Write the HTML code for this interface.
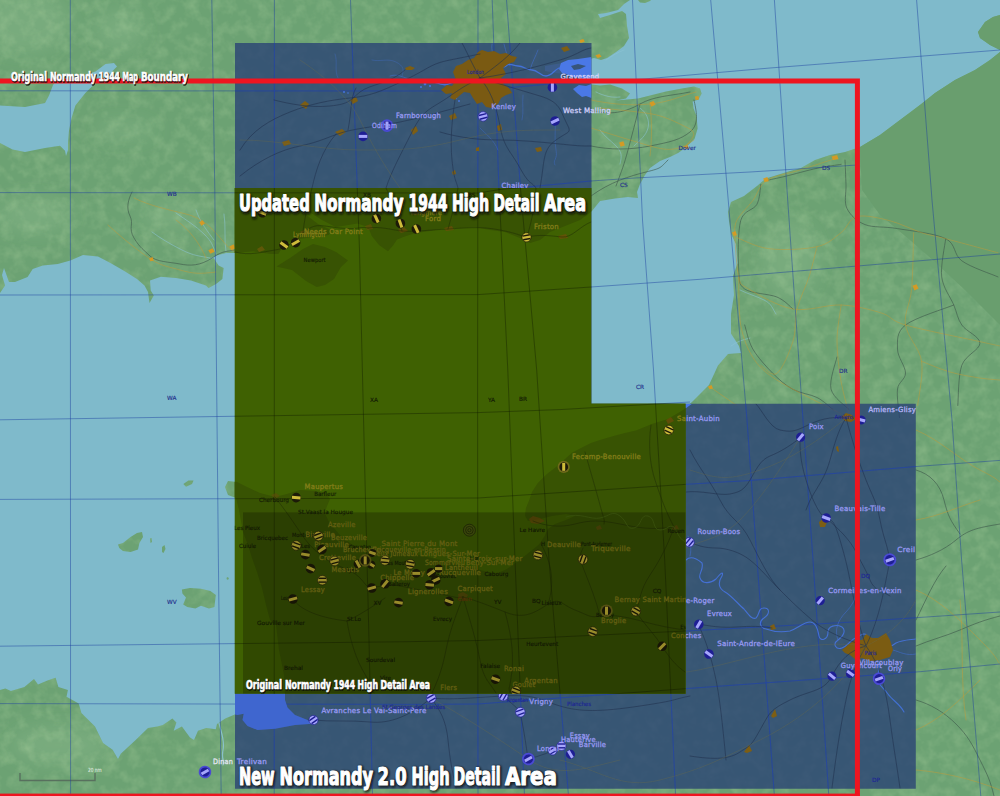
<!DOCTYPE html><html><head><meta charset="utf-8"><title>Normandy 2.0 map areas</title>
<style>html,body{margin:0;padding:0;background:#7fbacb;overflow:hidden}svg{display:block}
.lb{font-family:"DejaVu Sans","Liberation Sans",sans-serif;font-size:7.2px;letter-spacing:.25px}
.sm{font-family:"DejaVu Sans","Liberation Sans",sans-serif;font-size:5.8px}
.ti{font-family:"DejaVu Sans Condensed","DejaVu Sans","Liberation Sans",sans-serif;font-weight:bold}
</style></head><body>
<svg width="1000" height="796" viewBox="0 0 1000 796">
<defs>
<clipPath id="cb"><polygon points="235.0,43.0 591.5,43.0 591.5,403.7 915.8,403.7 915.8,788.7 235.0,788.7"/></clipPath>
<clipPath id="cg"><polygon points="234.7,188.0 591.3,188.0 591.3,403.5 685.6,403.5 685.6,693.7 234.7,693.7"/></clipPath>
<clipPath id="cbo"><path clip-rule="evenodd" d="M235.0 43.0 L591.5 43.0 L591.5 403.7 L915.8 403.7 L915.8 788.7 L235.0 788.7 Z M234.7 188.0 L591.3 188.0 L591.3 403.5 L685.6 403.5 L685.6 693.7 L234.7 693.7 Z"/></clipPath>
<clipPath id="cl">
<polygon points="0.0,0.0 630.0,0.0 624.0,4.0 618.0,10.0 606.0,13.0 598.0,14.0 600.0,18.0 610.0,15.0 622.0,11.0 626.0,14.0 627.0,26.0 629.0,38.0 624.0,46.0 616.0,52.0 607.0,58.0 601.0,60.0 594.0,58.0 585.0,60.0 570.0,62.0 556.0,64.0 545.0,66.0 545.0,71.0 556.0,73.0 570.0,75.0 580.0,80.0 592.0,84.4 600.0,85.4 610.0,84.4 622.0,88.4 630.0,93.5 626.0,98.5 616.0,100.5 638.0,98.5 650.0,95.5 666.0,91.5 682.0,88.4 694.0,86.4 700.0,88.4 701.6,93.5 698.6,99.5 692.6,101.5 693.6,108.5 696.6,116.6 697.6,128.6 694.6,138.7 686.6,146.7 678.5,152.8 670.5,156.8 660.0,161.0 650.0,168.0 645.0,175.0 640.0,184.0 637.0,192.0 638.0,198.0 628.0,197.0 615.0,198.5 600.0,201.0 592.0,211.0 580.0,220.0 565.0,226.0 550.0,232.0 540.0,240.0 530.0,243.0 520.0,238.0 505.0,232.0 490.0,230.0 475.0,227.0 460.0,228.0 446.0,228.0 430.0,231.0 416.0,233.0 406.0,236.0 397.0,239.6 393.4,245.0 388.0,251.3 379.0,245.0 371.8,236.0 368.2,227.0 357.4,223.4 346.6,225.2 335.8,227.0 322.0,220.0 308.0,211.0 305.0,214.0 318.0,224.0 332.2,230.6 328.6,235.1 314.2,236.9 299.8,238.7 289.0,241.4 281.8,248.6 278.2,254.0 271.0,254.0 253.0,251.3 235.0,253.0 226.0,253.0 216.0,255.4 206.0,260.4 213.6,258.0 218.6,265.4 223.6,268.0 222.4,279.0 216.0,284.0 208.5,288.0 206.0,285.5 191.0,280.5 176.0,278.0 160.8,276.7 150.0,280.5 150.7,290.5 153.8,295.6 149.5,303.0 148.0,292.0 144.5,285.5 137.0,279.0 125.6,271.7 110.5,263.0 98.0,256.6 83.0,255.0 70.4,260.4 57.8,264.0 42.7,265.4 32.7,269.0 27.6,277.0 15.0,282.0 9.0,282.0 4.0,268.0 2.0,275.0 5.0,285.5 0.0,293.0 0.0,143.0 12.5,149.5 25.0,152.0 45.0,148.0 60.0,145.7 65.0,150.7 66.0,156.0 68.0,150.0 68.0,143.0 69.0,130.6 71.6,118.0 75.4,105.5 85.4,93.0 95.5,83.0 110.5,73.0 117.0,66.5 114.0,63.0 105.5,64.0 95.5,71.6 82.0,76.0 70.0,78.0 58.0,78.0 53.0,85.0 49.0,95.5 45.0,103.0 25.0,107.0 0.0,105.5"/>
<polygon points="276.5,266.5 290.0,258.0 303.0,249.0 313.0,244.0 325.0,247.0 336.0,252.0 348.0,260.5 341.0,267.0 334.0,279.0 325.0,285.0 316.7,287.0 306.0,281.0 292.0,270.0"/>
<polygon points="1000.0,52.0 990.0,60.0 975.0,70.0 955.0,80.0 935.0,93.0 920.0,105.0 900.0,120.0 880.0,135.0 860.0,147.0 845.0,152.0 830.0,155.0 815.0,160.0 801.0,168.0 790.0,171.0 766.0,178.4 757.0,186.0 744.0,196.0 731.0,202.0 728.0,212.0 729.0,221.0 731.0,234.0 736.0,244.0 737.6,263.0 733.0,276.0 734.0,295.0 731.0,314.0 731.0,333.6 739.0,346.0 741.0,353.0 728.0,354.0 718.0,365.6 709.0,385.0 693.0,401.0 686.0,407.5 684.0,409.6 668.0,419.0 652.0,424.0 636.0,430.4 625.0,433.0 613.6,436.0 600.0,440.0 591.0,443.0 583.0,447.0 572.0,452.8 565.0,459.0 558.0,465.5 547.0,474.0 537.8,483.0 532.0,492.0 529.0,500.7 526.0,508.0 525.0,515.8 528.0,521.0 540.0,519.0 552.0,516.0 566.0,514.0 575.0,516.0 566.0,520.0 555.0,524.0 548.0,529.0 544.4,536.6 539.0,544.4 526.0,555.0 513.0,565.0 505.0,570.0 497.6,573.0 490.0,572.5 482.0,570.4 461.0,565.0 440.4,560.0 422.0,556.0 404.0,551.0 385.8,548.3 375.0,548.6 367.6,549.6 359.0,547.5 352.0,544.4 345.0,539.5 339.0,534.0 333.0,527.0 328.6,521.0 324.7,513.0 327.0,506.0 330.0,499.0 325.0,493.0 315.0,491.0 300.0,490.0 287.0,494.0 275.0,497.0 260.0,493.0 247.0,487.0 237.0,482.0 228.0,481.0 225.0,487.0 228.0,495.0 236.0,498.0 239.0,510.0 241.0,521.0 243.0,532.0 248.0,545.0 252.0,558.0 257.0,572.0 262.0,588.0 266.0,605.0 270.0,620.0 276.0,625.0 279.0,650.0 284.0,675.0 285.0,694.0 285.0,700.0 287.5,707.5 295.0,715.0 307.5,720.0 312.5,723.7 295.0,725.0 275.0,728.7 257.5,730.0 247.5,726.0 242.5,720.0 243.7,713.7 237.5,715.0 234.8,714.4 225.3,718.4 217.0,723.9 215.8,729.3 206.3,728.0 198.0,730.7 194.0,740.0 190.0,737.4 181.9,726.6 173.7,730.7 176.4,722.5 172.4,718.4 162.9,725.0 157.4,726.6 148.0,728.0 135.7,740.0 120.8,753.7 118.0,759.0 112.6,749.7 103.0,742.9 95.0,726.6 81.4,713.0 78.7,703.5 66.5,696.7 67.9,690.0 58.4,687.0 55.6,677.7 47.5,680.4 38.0,684.5 34.0,679.0 24.4,687.0 10.9,691.0 5.4,688.6 0.0,690.0 0.0,796.0 1000.0,796.0"/>
<polygon points="1000.0,15.0 993.0,17.0 985.0,22.0 978.0,32.0 980.0,38.0 990.0,45.0 1000.0,50.0"/>
<polygon points="181.9,589.5 190.0,588.0 200.9,588.7 210.4,590.9 215.8,595.0 214.4,607.0 209.0,608.5 200.9,605.8 195.4,608.5 187.3,607.0 183.2,604.4 186.0,597.6 182.4,593.6"/>
<polygon points="118.0,544.6 123.0,543.0 130.6,537.0 137.0,533.0 142.0,532.0 143.0,537.0 139.4,543.0 138.0,549.6 130.6,552.0 123.0,551.0 119.3,548.0"/>
<polygon points="183.4,484.0 188.4,480.5 193.5,480.5 192.0,484.0 186.0,486.8"/>
<polygon points="150.0,538.5 151.5,538.0 152.0,542.0 150.5,543.0"/>
<polygon points="162.0,547.0 164.5,545.0 165.5,549.0 163.5,553.0 162.0,552.0"/>
<polygon points="638.0,0.0 640.0,2.4 645.0,3.0 650.0,1.0 651.0,0.0"/>
<polygon points="227.0,577.0 229.0,578.0 228.0,580.0 226.5,579.0"/>
</clipPath>
<g id="lands">
<polygon points="0.0,0.0 630.0,0.0 624.0,4.0 618.0,10.0 606.0,13.0 598.0,14.0 600.0,18.0 610.0,15.0 622.0,11.0 626.0,14.0 627.0,26.0 629.0,38.0 624.0,46.0 616.0,52.0 607.0,58.0 601.0,60.0 594.0,58.0 585.0,60.0 570.0,62.0 556.0,64.0 545.0,66.0 545.0,71.0 556.0,73.0 570.0,75.0 580.0,80.0 592.0,84.4 600.0,85.4 610.0,84.4 622.0,88.4 630.0,93.5 626.0,98.5 616.0,100.5 638.0,98.5 650.0,95.5 666.0,91.5 682.0,88.4 694.0,86.4 700.0,88.4 701.6,93.5 698.6,99.5 692.6,101.5 693.6,108.5 696.6,116.6 697.6,128.6 694.6,138.7 686.6,146.7 678.5,152.8 670.5,156.8 660.0,161.0 650.0,168.0 645.0,175.0 640.0,184.0 637.0,192.0 638.0,198.0 628.0,197.0 615.0,198.5 600.0,201.0 592.0,211.0 580.0,220.0 565.0,226.0 550.0,232.0 540.0,240.0 530.0,243.0 520.0,238.0 505.0,232.0 490.0,230.0 475.0,227.0 460.0,228.0 446.0,228.0 430.0,231.0 416.0,233.0 406.0,236.0 397.0,239.6 393.4,245.0 388.0,251.3 379.0,245.0 371.8,236.0 368.2,227.0 357.4,223.4 346.6,225.2 335.8,227.0 322.0,220.0 308.0,211.0 305.0,214.0 318.0,224.0 332.2,230.6 328.6,235.1 314.2,236.9 299.8,238.7 289.0,241.4 281.8,248.6 278.2,254.0 271.0,254.0 253.0,251.3 235.0,253.0 226.0,253.0 216.0,255.4 206.0,260.4 213.6,258.0 218.6,265.4 223.6,268.0 222.4,279.0 216.0,284.0 208.5,288.0 206.0,285.5 191.0,280.5 176.0,278.0 160.8,276.7 150.0,280.5 150.7,290.5 153.8,295.6 149.5,303.0 148.0,292.0 144.5,285.5 137.0,279.0 125.6,271.7 110.5,263.0 98.0,256.6 83.0,255.0 70.4,260.4 57.8,264.0 42.7,265.4 32.7,269.0 27.6,277.0 15.0,282.0 9.0,282.0 4.0,268.0 2.0,275.0 5.0,285.5 0.0,293.0 0.0,143.0 12.5,149.5 25.0,152.0 45.0,148.0 60.0,145.7 65.0,150.7 66.0,156.0 68.0,150.0 68.0,143.0 69.0,130.6 71.6,118.0 75.4,105.5 85.4,93.0 95.5,83.0 110.5,73.0 117.0,66.5 114.0,63.0 105.5,64.0 95.5,71.6 82.0,76.0 70.0,78.0 58.0,78.0 53.0,85.0 49.0,95.5 45.0,103.0 25.0,107.0 0.0,105.5"/>
<polygon points="276.5,266.5 290.0,258.0 303.0,249.0 313.0,244.0 325.0,247.0 336.0,252.0 348.0,260.5 341.0,267.0 334.0,279.0 325.0,285.0 316.7,287.0 306.0,281.0 292.0,270.0"/>
<polygon points="1000.0,52.0 990.0,60.0 975.0,70.0 955.0,80.0 935.0,93.0 920.0,105.0 900.0,120.0 880.0,135.0 860.0,147.0 845.0,152.0 830.0,155.0 815.0,160.0 801.0,168.0 790.0,171.0 766.0,178.4 757.0,186.0 744.0,196.0 731.0,202.0 728.0,212.0 729.0,221.0 731.0,234.0 736.0,244.0 737.6,263.0 733.0,276.0 734.0,295.0 731.0,314.0 731.0,333.6 739.0,346.0 741.0,353.0 728.0,354.0 718.0,365.6 709.0,385.0 693.0,401.0 686.0,407.5 684.0,409.6 668.0,419.0 652.0,424.0 636.0,430.4 625.0,433.0 613.6,436.0 600.0,440.0 591.0,443.0 583.0,447.0 572.0,452.8 565.0,459.0 558.0,465.5 547.0,474.0 537.8,483.0 532.0,492.0 529.0,500.7 526.0,508.0 525.0,515.8 528.0,521.0 540.0,519.0 552.0,516.0 566.0,514.0 575.0,516.0 566.0,520.0 555.0,524.0 548.0,529.0 544.4,536.6 539.0,544.4 526.0,555.0 513.0,565.0 505.0,570.0 497.6,573.0 490.0,572.5 482.0,570.4 461.0,565.0 440.4,560.0 422.0,556.0 404.0,551.0 385.8,548.3 375.0,548.6 367.6,549.6 359.0,547.5 352.0,544.4 345.0,539.5 339.0,534.0 333.0,527.0 328.6,521.0 324.7,513.0 327.0,506.0 330.0,499.0 325.0,493.0 315.0,491.0 300.0,490.0 287.0,494.0 275.0,497.0 260.0,493.0 247.0,487.0 237.0,482.0 228.0,481.0 225.0,487.0 228.0,495.0 236.0,498.0 239.0,510.0 241.0,521.0 243.0,532.0 248.0,545.0 252.0,558.0 257.0,572.0 262.0,588.0 266.0,605.0 270.0,620.0 276.0,625.0 279.0,650.0 284.0,675.0 285.0,694.0 285.0,700.0 287.5,707.5 295.0,715.0 307.5,720.0 312.5,723.7 295.0,725.0 275.0,728.7 257.5,730.0 247.5,726.0 242.5,720.0 243.7,713.7 237.5,715.0 234.8,714.4 225.3,718.4 217.0,723.9 215.8,729.3 206.3,728.0 198.0,730.7 194.0,740.0 190.0,737.4 181.9,726.6 173.7,730.7 176.4,722.5 172.4,718.4 162.9,725.0 157.4,726.6 148.0,728.0 135.7,740.0 120.8,753.7 118.0,759.0 112.6,749.7 103.0,742.9 95.0,726.6 81.4,713.0 78.7,703.5 66.5,696.7 67.9,690.0 58.4,687.0 55.6,677.7 47.5,680.4 38.0,684.5 34.0,679.0 24.4,687.0 10.9,691.0 5.4,688.6 0.0,690.0 0.0,796.0 1000.0,796.0"/>
<polygon points="1000.0,15.0 993.0,17.0 985.0,22.0 978.0,32.0 980.0,38.0 990.0,45.0 1000.0,50.0"/>
<polygon points="181.9,589.5 190.0,588.0 200.9,588.7 210.4,590.9 215.8,595.0 214.4,607.0 209.0,608.5 200.9,605.8 195.4,608.5 187.3,607.0 183.2,604.4 186.0,597.6 182.4,593.6"/>
<polygon points="118.0,544.6 123.0,543.0 130.6,537.0 137.0,533.0 142.0,532.0 143.0,537.0 139.4,543.0 138.0,549.6 130.6,552.0 123.0,551.0 119.3,548.0"/>
<polygon points="183.4,484.0 188.4,480.5 193.5,480.5 192.0,484.0 186.0,486.8"/>
<polygon points="150.0,538.5 151.5,538.0 152.0,542.0 150.5,543.0"/>
<polygon points="162.0,547.0 164.5,545.0 165.5,549.0 163.5,553.0 162.0,552.0"/>
<polygon points="638.0,0.0 640.0,2.4 645.0,3.0 650.0,1.0 651.0,0.0"/>
<polygon points="227.0,577.0 229.0,578.0 228.0,580.0 226.5,579.0"/>
</g>
<g id="grid" fill="none">
<polyline points="70.3,0.0 70.6,796.0"/>
<polyline points="211.8,0.0 214.8,190.0 216.6,380.0 218.6,580.0 221.2,796.0"/>
<polyline points="274.4,0.0 274.2,796.0"/>
<polyline points="350.5,0.0 359.5,250.0 365.0,480.0 369.0,640.0 372.5,796.0"/>
<polyline points="478.0,0.0 477.6,400.0 478.0,796.0"/>
<polyline points="492.2,0.0 499.0,190.0 507.8,370.0 515.0,560.0 524.5,796.0"/>
<polyline points="506.5,0.0 520.6,190.0 536.7,370.0 549.0,560.0 568.5,796.0"/>
<polyline points="632.5,0.0 642.5,220.0 653.5,370.0 664.7,560.0 675.6,796.0"/>
<polyline points="710.7,0.0 724.8,160.0 747.0,420.0 757.0,560.0 774.4,796.0"/>
<polyline points="774.4,0.0 787.7,200.0 803.0,420.0 813.0,560.0 828.8,796.0"/>
<polyline points="916.6,0.0 932.0,200.0 952.0,420.0 961.6,560.0 980.8,796.0"/>
<polyline points="0.0,90.8 478.0,91.0 495.0,89.0 555.0,83.5 644.0,79.0 770.0,68.0 1000.0,50.0"/>
<polyline points="0.0,192.6 478.0,193.0 500.0,189.5 591.0,181.0 635.0,178.0 750.0,172.0 788.0,169.6 857.0,165.0"/>
<polyline points="0.0,295.0 478.0,294.6 591.0,287.0 700.0,279.3 1000.0,254.0"/>
<polyline points="0.0,419.8 478.0,412.6 560.0,409.6 656.0,404.0 690.0,402.0"/>
<polyline points="0.0,499.4 478.0,498.0 685.0,484.4 750.0,480.5 916.0,466.5 1000.0,460.4"/>
<polyline points="0.0,646.2 400.0,641.8 478.0,640.5 520.0,638.7 686.0,631.0 853.0,622.0 1000.0,612.0"/>
<polyline points="0.0,703.6 420.0,704.4 478.0,704.0 700.0,687.6 920.0,671.7 1000.0,664.0"/>
</g>
<linearGradient id="gtop" x1="0" y1="0" x2="0" y2="1"><stop offset="0" stop-color="#3e5e05" stop-opacity="0"/><stop offset="1" stop-color="#3e5e05" stop-opacity="1"/></linearGradient>
<filter id="sh" x="-5%" y="-30%" width="110%" height="170%"><feGaussianBlur stdDeviation="1.1"/></filter>
<filter id="sh2" x="-5%" y="-30%" width="110%" height="170%"><feGaussianBlur stdDeviation="0.7"/></filter>
<filter id="bl8" x="-30%" y="-30%" width="160%" height="160%"><feGaussianBlur stdDeviation="9"/></filter>
<filter id="tx" x="0" y="0" width="100%" height="100%" color-interpolation-filters="sRGB"><feTurbulence type="fractalNoise" baseFrequency="0.085" numOctaves="3" seed="7" result="n"/><feColorMatrix in="n" type="matrix" values="0 0 0 0 0.82  0 0 0 0 0.93  0 0 0 0 0.72  1.6 0 0 0 -0.62"/></filter>
</defs>
<rect width="1000" height="796" fill="#7fbacb"/>
<use href="#lands" fill="#6ca273"/>
<g clip-path="url(#cl)"><g filter="url(#bl8)" fill="#a6cfa0" fill-opacity=".22"><ellipse cx="25" cy="22" rx="45" ry="32"/><ellipse cx="35" cy="215" rx="38" ry="18"/><ellipse cx="120" cy="30" rx="25" ry="20"/><ellipse cx="125" cy="130" rx="30" ry="10"/><ellipse cx="790" cy="260" rx="30" ry="40"/><ellipse cx="60" cy="745" rx="50" ry="20"/><ellipse cx="170" cy="215" rx="30" ry="14"/></g></g>
<g clip-path="url(#cl)"><rect x="0" y="0" width="1000" height="796" filter="url(#tx)" opacity=".25"/></g>
<g clip-path="url(#cl)"><polygon points="860,100 1000,0 1000,325 965,290 935,262 910,240 880,215 862,190 860,150" fill="#699e6e" fill-opacity="1"/></g>
<path d="M176 213 C186 220 196 226 204 234 S212 244 216 254" fill="none" stroke="#8cc4d4" stroke-width="0.70" stroke-opacity="0.80" stroke-linejoin="round" stroke-linecap="round"/>
<path d="M196 210 C200 222 208 232 214 240" fill="none" stroke="#8cc4d4" stroke-width="0.70" stroke-opacity="0.80" stroke-linejoin="round" stroke-linecap="round"/>
<path d="M224 214 C226 226 224 240 226 252" fill="none" stroke="#8cc4d4" stroke-width="0.70" stroke-opacity="0.80" stroke-linejoin="round" stroke-linecap="round"/>
<path d="M152 232 C160 238 170 244 182 250 S200 256 210 258" fill="none" stroke="#8cc4d4" stroke-width="0.70" stroke-opacity="0.80" stroke-linejoin="round" stroke-linecap="round"/>
<path d="M600 130 C604 136 610 140 616 146 S622 156 620 164" fill="none" stroke="#8cc4d4" stroke-width="0.70" stroke-opacity="0.80" stroke-linejoin="round" stroke-linecap="round"/>
<path d="M640 108 C646 112 650 120 648 128 S640 140 634 146" fill="none" stroke="#8cc4d4" stroke-width="0.70" stroke-opacity="0.80" stroke-linejoin="round" stroke-linecap="round"/>
<path d="M606 60 C612 56 618 52 624 50" fill="none" stroke="#8cc4d4" stroke-width="0.70" stroke-opacity="0.80" stroke-linejoin="round" stroke-linecap="round"/>
<path d="M596 92 C604 96 612 98 620 97" fill="none" stroke="#8cc4d4" stroke-width="0.70" stroke-opacity="0.80" stroke-linejoin="round" stroke-linecap="round"/>
<path d="M740 290 C748 294 756 296 764 300 S772 308 776 314" fill="none" stroke="#8cc4d4" stroke-width="0.70" stroke-opacity="0.80" stroke-linejoin="round" stroke-linecap="round"/>
<path d="M731 346 C736 342 742 340 750 338" fill="none" stroke="#8cc4d4" stroke-width="0.70" stroke-opacity="0.80" stroke-linejoin="round" stroke-linecap="round"/>
<path d="M132 192 C128 200 126 208 130 216 S128 228 134 238 S144 250 150 256 S170 262 180 264 S200 266 212 258 S226 252 235 250" fill="none" stroke="#3f5a4c" stroke-width="0.80" stroke-opacity="0.80" stroke-linejoin="round" stroke-linecap="round"/>
<path d="M591 146 C610 150 630 150 650 146 S680 140 690 132 S696 110 694 100" fill="none" stroke="#3f5a4c" stroke-width="0.80" stroke-opacity="0.80" stroke-linejoin="round" stroke-linecap="round"/>
<path d="M591 110 C610 116 626 112 640 104 S670 96 690 92" fill="none" stroke="#3f5a4c" stroke-width="0.80" stroke-opacity="0.80" stroke-linejoin="round" stroke-linecap="round"/>
<path d="M640 104 C636 120 632 135 628 150 S622 170 616 186" fill="none" stroke="#3f5a4c" stroke-width="0.80" stroke-opacity="0.80" stroke-linejoin="round" stroke-linecap="round"/>
<path d="M591 196 C610 182 630 176 646 172 S660 168 668 160" fill="none" stroke="#3f5a4c" stroke-width="0.80" stroke-opacity="0.80" stroke-linejoin="round" stroke-linecap="round"/>
<path d="M916 560 C930 556 944 550 956 540 S976 528 1000 524" fill="none" stroke="#3f5a4c" stroke-width="0.80" stroke-opacity="0.80" stroke-linejoin="round" stroke-linecap="round"/>
<path d="M916 470 C930 474 940 484 944 500 S950 520 960 534" fill="none" stroke="#3f5a4c" stroke-width="0.80" stroke-opacity="0.80" stroke-linejoin="round" stroke-linecap="round"/>
<path d="M916 646 C930 640 946 636 960 630 S984 620 1000 616" fill="none" stroke="#3f5a4c" stroke-width="0.80" stroke-opacity="0.80" stroke-linejoin="round" stroke-linecap="round"/>
<path d="M916 700 C930 704 944 712 956 724 S972 744 980 760 S990 780 994 796" fill="none" stroke="#3f5a4c" stroke-width="0.80" stroke-opacity="0.80" stroke-linejoin="round" stroke-linecap="round"/>
<path d="M916 620 C926 600 934 580 946 566" fill="none" stroke="#3f5a4c" stroke-width="0.80" stroke-opacity="0.80" stroke-linejoin="round" stroke-linecap="round"/>
<path d="M845.0 160.0 C845.2 164.2 845.7 176.9 846.0 185.0 C846.3 193.1 843.8 201.9 847.0 208.5 C850.2 215.1 856.6 221.2 865.0 224.6 C873.4 227.9 884.0 226.2 897.5 228.6 C911.0 230.9 935.0 233.3 945.7 238.7 C956.4 244.1 953.1 254.4 961.8 260.8 C970.5 267.2 992.0 274.2 998.0 276.9" fill="none" stroke="#3f5a4c" stroke-width="0.80" stroke-opacity="0.80" stroke-linejoin="round" stroke-linecap="round"/>
<path d="M945.7 238.7 C945.0 245.1 940.4 265.8 941.7 276.9 C943.1 287.9 950.4 297.0 953.8 305.0 C957.1 313.0 957.4 318.6 961.8 325.0 C966.1 331.4 979.9 336.5 979.9 343.2 C979.9 349.9 965.5 354.9 961.8 365.3 C958.1 375.7 958.5 398.8 957.8 405.5" fill="none" stroke="#3f5a4c" stroke-width="0.80" stroke-opacity="0.80" stroke-linejoin="round" stroke-linecap="round"/>
<path d="M953.8 305.0 C945.8 308.3 914.9 317.7 905.5 325.0 C896.1 332.3 897.5 341.0 897.5 349.0 C897.5 357.0 905.5 366.3 905.5 373.0 C905.5 379.7 898.5 381.6 897.5 389.0 C896.5 396.4 899.2 412.8 899.5 417.6" fill="none" stroke="#3f5a4c" stroke-width="0.80" stroke-opacity="0.80" stroke-linejoin="round" stroke-linecap="round"/>
<path d="M760.8 184.4 C760.1 187.8 760.1 198.5 756.8 204.5 C753.4 210.5 743.7 209.9 740.7 220.6 C737.7 231.3 738.0 257.4 738.7 268.8 C739.4 280.2 738.3 284.3 744.7 289.0 C751.1 293.7 768.9 293.7 776.9 297.0 C784.9 300.3 790.3 307.0 793.0 309.0" fill="none" stroke="#3f5a4c" stroke-width="0.80" stroke-opacity="0.80" stroke-linejoin="round" stroke-linecap="round"/>
<path d="M744.7 325.0 C746.1 329.0 748.1 340.9 752.8 349.0 C757.5 357.1 766.2 366.7 772.9 373.4 C779.6 380.1 785.6 385.4 793.0 389.4 C800.4 393.4 810.3 394.1 817.0 397.5 C823.7 400.9 830.3 407.5 833.0 409.5" fill="none" stroke="#3f5a4c" stroke-width="0.80" stroke-opacity="0.80" stroke-linejoin="round" stroke-linecap="round"/>
<path d="M837.0 357.0 C836.0 362.3 829.0 380.2 831.0 389.0 C833.0 397.8 846.0 406.1 849.0 409.5" fill="none" stroke="#3f5a4c" stroke-width="0.80" stroke-opacity="0.80" stroke-linejoin="round" stroke-linecap="round"/>
<path d="M766.8 180.4 C769.8 179.7 776.6 178.4 785.0 176.4 C793.4 174.4 807.6 170.3 817.0 168.3 C826.4 166.3 837.2 165.0 841.2 164.3" fill="none" stroke="#3f5a4c" stroke-width="0.80" stroke-opacity="0.80" stroke-linejoin="round" stroke-linecap="round"/>
<path d="M219 723 C221 732 225 740 223 750 S225 760 223 765" fill="none" stroke="#8cc4d4" stroke-width="1.20" stroke-opacity="0.90" stroke-linejoin="round" stroke-linecap="round"/>
<path d="M108 225 C120 236 132 246 146 256 S166 266 180 270 S200 274 216 272" fill="none" stroke="#c79a32" stroke-width="0.80" stroke-opacity="0.60" stroke-linejoin="round" stroke-linecap="round"/>
<path d="M134 198 C150 206 170 210 186 214 S210 226 222 240 S232 250 240 252" fill="none" stroke="#c79a32" stroke-width="0.80" stroke-opacity="0.60" stroke-linejoin="round" stroke-linecap="round"/>
<path d="M176 220 C190 230 200 244 206 258" fill="none" stroke="#c79a32" stroke-width="0.80" stroke-opacity="0.60" stroke-linejoin="round" stroke-linecap="round"/>
<path d="M591 128 C610 134 630 140 650 146 S680 150 694 140" fill="none" stroke="#c79a32" stroke-width="0.80" stroke-opacity="0.60" stroke-linejoin="round" stroke-linecap="round"/>
<path d="M591 100 C610 104 630 106 650 104 S680 96 696 92" fill="none" stroke="#c79a32" stroke-width="0.80" stroke-opacity="0.60" stroke-linejoin="round" stroke-linecap="round"/>
<path d="M650 104 C652 120 652 140 650 156" fill="none" stroke="#c79a32" stroke-width="0.80" stroke-opacity="0.60" stroke-linejoin="round" stroke-linecap="round"/>
<path d="M600 108 C620 110 640 112 652 114 S676 122 688 128 S690 140 686 146" fill="none" stroke="#c79a32" stroke-width="0.80" stroke-opacity="0.60" stroke-linejoin="round" stroke-linecap="round"/>
<path d="M916 430 C940 440 960 460 980 470 S996 480 1000 482" fill="none" stroke="#c79a32" stroke-width="0.80" stroke-opacity="0.60" stroke-linejoin="round" stroke-linecap="round"/>
<path d="M916 520 C940 516 960 506 980 500" fill="none" stroke="#c79a32" stroke-width="0.80" stroke-opacity="0.60" stroke-linejoin="round" stroke-linecap="round"/>
<path d="M916 590 C940 600 960 620 980 640 S996 660 1000 664" fill="none" stroke="#c79a32" stroke-width="0.80" stroke-opacity="0.60" stroke-linejoin="round" stroke-linecap="round"/>
<path d="M916 730 C940 720 960 700 980 680" fill="none" stroke="#c79a32" stroke-width="0.80" stroke-opacity="0.60" stroke-linejoin="round" stroke-linecap="round"/>
<path d="M916 770 C940 772 970 778 1000 790" fill="none" stroke="#c79a32" stroke-width="0.80" stroke-opacity="0.60" stroke-linejoin="round" stroke-linecap="round"/>
<path d="M960 600 C964 640 960 680 966 720" fill="none" stroke="#c79a32" stroke-width="0.80" stroke-opacity="0.60" stroke-linejoin="round" stroke-linecap="round"/>
<path d="M837.0 158.0 C830.8 160.0 811.7 166.3 800.0 170.0 C788.3 173.7 774.7 175.3 766.8 180.4 C758.9 185.5 757.8 193.8 752.8 200.5 C747.8 207.2 739.7 214.6 736.7 220.6 C733.7 226.6 735.0 234.0 734.7 236.7" fill="none" stroke="#c79a32" stroke-width="0.80" stroke-opacity="0.60" stroke-linejoin="round" stroke-linecap="round"/>
<path d="M734.7 236.7 C740.4 238.7 755.1 247.0 768.8 248.7 C782.5 250.4 805.0 249.4 817.0 246.7 C829.0 244.0 834.3 237.7 841.0 232.7 C847.7 227.7 848.9 218.6 857.0 216.6 C865.1 214.6 878.6 217.9 889.4 220.6 C900.2 223.3 912.2 229.7 921.6 232.7 C931.0 235.7 933.0 235.3 945.7 238.7 C958.4 242.0 989.3 250.5 998.0 252.8" fill="none" stroke="#c79a32" stroke-width="0.80" stroke-opacity="0.60" stroke-linejoin="round" stroke-linecap="round"/>
<path d="M734.7 236.7 C735.4 243.4 736.4 268.2 738.7 276.9 C741.0 285.6 739.7 283.6 748.7 289.0 C757.8 294.4 777.6 306.3 793.0 309.0 C808.4 311.7 826.5 304.3 841.2 305.0 C855.9 305.7 870.7 309.7 881.4 313.0 C892.1 316.3 889.4 320.3 905.5 325.0 C921.6 329.7 962.1 337.7 977.9 341.2 C993.6 344.7 996.3 345.2 1000.0 346.0" fill="none" stroke="#c79a32" stroke-width="0.80" stroke-opacity="0.60" stroke-linejoin="round" stroke-linecap="round"/>
<path d="M817.0 246.7 C815.7 251.7 812.3 266.5 809.0 276.9 C805.7 287.3 799.7 298.3 797.0 309.0 C794.3 319.7 796.4 330.5 793.0 341.2 C789.6 351.9 782.3 369.4 776.9 373.4 C771.5 377.4 763.5 366.6 760.8 365.3" fill="none" stroke="#c79a32" stroke-width="0.80" stroke-opacity="0.60" stroke-linejoin="round" stroke-linecap="round"/>
<path d="M913.6 232.7 C913.3 242.1 913.0 273.6 911.6 289.0 C910.2 304.4 903.8 312.9 905.5 325.0 C907.2 337.1 919.6 347.9 921.6 361.3 C923.6 374.7 918.3 398.1 917.6 405.5" fill="none" stroke="#c79a32" stroke-width="0.80" stroke-opacity="0.60" stroke-linejoin="round" stroke-linecap="round"/>
<path d="M841.2 305.0 C840.5 311.0 837.0 328.3 837.0 341.0 C837.0 353.7 839.0 368.9 841.0 381.0 C843.0 393.1 847.7 408.2 849.0 413.6" fill="none" stroke="#c79a32" stroke-width="0.80" stroke-opacity="0.60" stroke-linejoin="round" stroke-linecap="round"/>
<path d="M738.7 276.9 C739.0 284.9 738.4 311.6 740.7 325.0 C743.1 338.4 747.4 348.6 752.8 357.3 C758.2 366.0 763.5 370.7 772.9 377.4 C782.3 384.1 797.6 391.5 809.0 397.5 C820.4 403.5 835.7 410.9 841.0 413.6" fill="none" stroke="#c79a32" stroke-width="0.80" stroke-opacity="0.60" stroke-linejoin="round" stroke-linecap="round"/>
<path d="M710.6 387.4 L736.7 405.5" fill="none" stroke="#c79a32" stroke-width="0.80" stroke-opacity="0.60" stroke-linejoin="round" stroke-linecap="round"/>
<path d="M921.6 361.3 C926.3 363.1 940.3 369.2 950.0 372.0 C959.7 374.8 971.7 376.7 980.0 378.0 C988.3 379.3 996.7 379.7 1000.0 380.0" fill="none" stroke="#c79a32" stroke-width="0.80" stroke-opacity="0.60" stroke-linejoin="round" stroke-linecap="round"/>
<polygon points="199.2,222.3 202.7,220.2 204.8,223.7 201.3,225.8" fill="#d89a22" fill-opacity="0.95"/>
<polygon points="149.1,258.4 152.6,257.0 153.9,260.5 150.4,261.2" fill="#d89a22" fill-opacity="0.95"/>
<polygon points="208.3,250.3 212.6,248.2 214.7,251.7 210.4,253.8" fill="#d89a22" fill-opacity="0.95"/>
<polygon points="229.3,246.4 233.6,244.3 235.7,248.5 231.4,249.9" fill="#d89a22" fill-opacity="0.95"/>
<polygon points="619.2,142.6 623.4,141.2 624.8,145.4 620.6,146.8" fill="#d89a22" fill-opacity="0.95"/>
<polygon points="649.4,102.5 653.5,101.1 655.6,104.6 651.5,106.7" fill="#d89a22" fill-opacity="0.95"/>
<polygon points="595.4,55.3 599.5,53.9 601.6,56.7 597.5,58.1" fill="#d89a22" fill-opacity="0.95"/>
<polygon points="694.9,96.6 698.4,95.9 699.1,99.4 695.6,100.1" fill="#d89a22" fill-opacity="0.95"/>
<polygon points="684.0,146.4 687.5,145.0 689.0,148.5 685.5,149.2" fill="#d89a22" fill-opacity="0.95"/>
<polygon points="763.2,178.5 767.4,177.1 768.8,181.3 764.6,182.0" fill="#d89a22" fill-opacity="0.95"/>
<polygon points="831.5,156.5 837.1,155.1 838.5,159.3 832.9,160.0" fill="#d89a22" fill-opacity="0.95"/>
<polygon points="732.0,232.5 735.5,231.1 737.0,235.3 733.5,236.0" fill="#d89a22" fill-opacity="0.95"/>
<polygon points="912.4,285.7 916.5,284.3 918.6,288.5 914.5,290.6" fill="#d89a22" fill-opacity="0.95"/>
<polygon points="708.0,386.4 711.5,385.0 713.0,388.5 709.5,389.2" fill="#d89a22" fill-opacity="0.95"/>
<polygon points="579.2,40.3 583.4,38.9 584.8,41.7 580.6,43.1" fill="#d89a22" fill-opacity="0.95"/>
<text class="sm" x="167.0" y="195.5" fill="#24308c" stroke="#24308c" stroke-width="0.15">WB</text>
<text class="sm" x="167.0" y="400.0" fill="#24308c" stroke="#24308c" stroke-width="0.15">WA</text>
<text class="sm" x="167.0" y="604.0" fill="#24308c" stroke="#24308c" stroke-width="0.15">WV</text>
<text class="sm" x="620.0" y="187.0" fill="#24308c" stroke="#24308c" stroke-width="0.15">CS</text>
<text class="sm" x="636.0" y="389.0" fill="#24308c" stroke="#24308c" stroke-width="0.15">CR</text>
<text class="sm" x="822.0" y="169.5" fill="#24308c" stroke="#24308c" stroke-width="0.15">DS</text>
<text class="sm" x="839.0" y="373.0" fill="#24308c" stroke="#24308c" stroke-width="0.15">DR</text>
<text class="sm" x="678.5" y="150.0" fill="#24308c" stroke="#24308c" stroke-width="0.15">Dover</text>
<path d="M20 773 V780.5 H95 V773" fill="none" stroke="#58705e" stroke-width="1.4"/>
<text class="sm" x="88.0" y="772.0" fill="#dfe6df" stroke="#dfe6df" stroke-width="0.15" textLength="13.5" lengthAdjust="spacingAndGlyphs">20 nm</text>
<use href="#grid" stroke="#1c3fa0" stroke-opacity=".55" stroke-width=".85"/>
<polygon points="235.0,43.0 591.5,43.0 591.5,403.7 915.8,403.7 915.8,788.7 235.0,788.7" fill="#263c74" fill-opacity=".75"/>
<g clip-path="url(#cb)">
<use href="#grid" stroke="#2248c4" stroke-opacity=".5" stroke-width=".9"/>
<polygon points="235.0,694.0 285.0,694.0 285.0,700.0 287.5,707.5 295.0,715.0 307.5,720.0 312.5,723.7 295.0,725.0 275.0,728.7 257.5,730.0 247.5,726.0 242.5,720.0 243.7,713.7 237.5,715.0 235.0,714.4" fill="#3f66cf" fill-opacity="1.00"/>
<polygon points="559.0,69.0 561.0,63.0 568.0,60.0 578.0,59.0 591.5,57.0 591.5,81.0 584.0,80.0 580.0,77.0 572.0,77.0 566.0,74.0 562.0,73.0" fill="#4a78e6" fill-opacity="1.00"/>
<polygon points="571.0,66.0 578.0,64.0 586.0,66.0 580.0,69.0 574.0,70.0" fill="#37557a" fill-opacity="1.00"/>
<polygon points="573.0,89.0 579.0,85.0 586.0,86.0 591.5,84.0 591.5,98.0 586.0,96.0 582.0,97.0 577.0,93.0" fill="#4a78e6" fill-opacity="1.00"/>
<polygon points="685.6,403.7 692.0,403.7 685.6,408.5" fill="#4a78e6" fill-opacity="1.00"/>
<path d="M559 68 C554 70 552 76 546 76 S538 70 532 70 S524 66 518 66 S510 62 506 66 S500 62 494 64 S484 70 476 72 S462 76 456 80 S446 86 440 84 S430 80 424 82" fill="none" stroke="#4473dc" stroke-width="1.30" stroke-opacity="0.95" stroke-linejoin="round" stroke-linecap="round"/>
<path d="M424 82 C418 84 412 80 406 78 S396 74 390 76" fill="none" stroke="#4473dc" stroke-width="0.80" stroke-opacity="0.60" stroke-linejoin="round" stroke-linecap="round"/>
<circle cx="425.0" cy="84.0" r="1.4" fill="#4473dc"/>
<circle cx="430.0" cy="86.0" r="1.1" fill="#4473dc"/>
<circle cx="421.0" cy="87.0" r="1.0" fill="#4473dc"/>
<circle cx="344.0" cy="92.0" r="1.0" fill="#4473dc"/>
<circle cx="348.0" cy="93.0" r="0.8" fill="#4473dc"/>
<circle cx="456.0" cy="98.0" r="1.2" fill="#4473dc"/>
<circle cx="459.0" cy="101.0" r="1.0" fill="#4473dc"/>
<path d="M510 66 C508 58 506 52 504 44 M497 63 C493 56 491 50 492 44 M530 70 C532 62 536 56 538 50" fill="none" stroke="#4473dc" stroke-width="0.70" stroke-opacity="0.70" stroke-linejoin="round" stroke-linecap="round"/>
<path d="M555 121 C556 130 554 140 556 150 S552 160 555 165 M523 95 C522 104 524 112 522 120 M480 128 C486 134 494 140 498 150" fill="none" stroke="#4473dc" stroke-width="0.60" stroke-opacity="0.60" stroke-linejoin="round" stroke-linecap="round"/>
<path d="M335 54 C338 62 334 70 338 78 M372 60 C380 62 388 58 396 62 S404 70 402 76" fill="none" stroke="#4473dc" stroke-width="0.60" stroke-opacity="0.50" stroke-linejoin="round" stroke-linecap="round"/>
<path d="M686 560 C690 556 696 558 702 563 C704 570 698 574 700 578 C702 584 710 584 716 579 C720 574 724 570 722 576 C718 582 718 588 725 592 C732 596 738 604 744 609 C748 614 752 620 756 618 C760 614 758 608 764 608 C770 608 770 614 764 618 C758 622 760 628 766 629 C774 632 784 632 790 631 C798 628 804 622 810 622 C816 622 818 630 819 636 C820 642 828 640 828 632 C828 626 836 624 842 627 C846 630 844 636 838 640 C832 644 836 650 842 648 C848 646 850 640 857 637 C862 634 866 632 868 637 C870 642 872 646 878 648 C886 650 892 646 896 643 C902 640 908 640 916 639" fill="none" stroke="#4672d8" stroke-width="1.10" stroke-opacity="0.95" stroke-linejoin="round" stroke-linecap="round"/>
<path d="M878 650 C876 660 880 668 878 676 C876 684 884 688 888 694 C892 700 900 704 904 712" fill="none" stroke="#4473dc" stroke-width="1.10" stroke-opacity="0.90" stroke-linejoin="round" stroke-linecap="round"/>
<path d="M838 640 C834 630 838 620 846 612 C852 606 856 598 858 590 M690 556 C692 548 690 542 688 536" fill="none" stroke="#4473dc" stroke-width="0.70" stroke-opacity="0.70" stroke-linejoin="round" stroke-linecap="round"/>
<path d="M893 650 C900 652 906 656 916 654" fill="none" stroke="#4473dc" stroke-width="0.70" stroke-opacity="0.70" stroke-linejoin="round" stroke-linecap="round"/>
<polygon points="441.0,90.0 447.0,85.0 452.0,86.0 456.0,80.0 453.0,72.0 456.0,66.0 462.0,64.0 468.0,60.0 474.0,58.0 478.0,52.0 482.0,50.0 488.0,52.0 494.0,51.0 500.0,54.0 506.0,53.0 512.0,56.0 517.0,57.0 514.0,62.0 508.0,64.0 503.0,68.0 506.0,74.0 501.0,78.0 503.0,84.0 509.0,88.0 512.0,93.0 506.0,95.0 501.0,98.0 498.0,104.0 492.0,108.0 486.0,107.0 482.0,102.0 477.0,104.0 473.0,98.0 470.0,93.0 464.0,92.0 459.0,96.0 455.0,100.0 450.0,98.0 452.0,93.0 446.0,94.0" fill="#7a5a12" fill-opacity="1.00"/>
<polygon points="842.0,650.0 848.0,645.0 855.0,640.0 862.0,640.0 866.0,634.0 872.0,638.0 878.0,638.0 886.0,633.0 890.0,640.0 893.0,650.0 890.0,657.0 880.0,660.0 870.0,661.0 862.0,658.0 856.0,660.0 850.0,655.0 845.0,653.0" fill="#7b5c12" fill-opacity="1.00"/>
<polygon points="841.0,417.0 846.0,413.0 852.0,415.0 856.0,419.0 851.0,422.0 845.0,421.0" fill="#7d5e14" fill-opacity="1.00"/>
<polygon points="819.0,522.0 823.0,519.0 827.0,522.0 825.0,527.0 820.0,527.0" fill="#7d5e14" fill-opacity="1.00"/>
<polygon points="770.0,626.0 774.0,624.0 776.0,629.0 771.0,630.0" fill="#7d5e14" fill-opacity="1.00"/>
<polygon points="771.0,716.0 775.0,709.0 777.0,716.0 773.0,718.0" fill="#7d5e14" fill-opacity="1.00"/>
<polygon points="744.0,752.0 749.0,745.0 752.0,751.0 747.0,753.0" fill="#7d5e14" fill-opacity="1.00"/>
<polygon points="405.0,68.0 410.0,66.0 415.0,68.0 412.0,70.0 406.0,70.0" fill="#7d5e14" fill-opacity="1.00"/>
<polygon points="350.0,100.0 356.0,97.0 358.0,101.0 353.0,104.0" fill="#7d5e14" fill-opacity="1.00"/>
<polygon points="300.0,105.0 305.0,101.0 309.0,104.0 306.0,109.0" fill="#7d5e14" fill-opacity="1.00"/>
<polygon points="335.0,132.0 342.0,129.0 346.0,132.0 340.0,136.0" fill="#7d5e14" fill-opacity="1.00"/>
<polygon points="282.0,142.0 289.0,140.0 291.0,144.0 284.0,146.0" fill="#7d5e14" fill-opacity="1.00"/>
<polygon points="411.0,130.0 416.0,126.0 418.0,131.0 413.0,135.0" fill="#7d5e14" fill-opacity="1.00"/>
<polygon points="449.0,116.0 455.0,113.0 457.0,118.0 451.0,120.0" fill="#7d5e14" fill-opacity="1.00"/>
<polygon points="497.0,126.0 501.0,124.0 502.0,130.0 498.0,131.0" fill="#7d5e14" fill-opacity="1.00"/>
<polygon points="535.0,148.0 541.0,147.0 542.0,151.0 537.0,152.0" fill="#7d5e14" fill-opacity="1.00"/>
<polygon points="561.0,48.0 567.0,46.0 570.0,50.0 564.0,52.0" fill="#7d5e14" fill-opacity="1.00"/>
<polygon points="452.0,172.0 455.0,170.0 456.0,174.0 453.0,175.0" fill="#7d5e14" fill-opacity="1.00"/>
<polygon points="476.0,148.0 479.0,147.0 479.0,151.0 476.0,151.0" fill="#7d5e14" fill-opacity="1.00"/>
<polygon points="836.0,447.0 838.0,446.0 839.0,452.0 837.0,451.0" fill="#7d5e14" fill-opacity="1.00"/>
<path d="M866 646 C860 630 856 610 852 590 S846 560 840 540 S832 520 826 518 S812 500 806 480 S800 450 800 438" fill="none" stroke="#22324f" stroke-width="0.80" stroke-opacity="0.75" stroke-linejoin="round" stroke-linecap="round"/>
<path d="M866 646 C874 630 880 610 884 590 S888 570 890 560" fill="none" stroke="#22324f" stroke-width="0.80" stroke-opacity="0.75" stroke-linejoin="round" stroke-linecap="round"/>
<path d="M866 646 C850 650 840 660 832 676 S810 690 790 700 S770 712 760 730 S750 745 740 752 S715 760 690 756" fill="none" stroke="#22324f" stroke-width="0.80" stroke-opacity="0.75" stroke-linejoin="round" stroke-linecap="round"/>
<path d="M866 646 C856 662 850 680 846 700 S838 740 832 788" fill="none" stroke="#22324f" stroke-width="0.80" stroke-opacity="0.75" stroke-linejoin="round" stroke-linecap="round"/>
<path d="M866 646 C880 664 886 690 890 720 S896 760 900 788" fill="none" stroke="#22324f" stroke-width="0.80" stroke-opacity="0.75" stroke-linejoin="round" stroke-linecap="round"/>
<path d="M866 646 C846 640 826 632 812 620 S790 600 780 590 S760 560 750 540 S730 520 720 500 S700 470 690 450" fill="none" stroke="#22324f" stroke-width="0.80" stroke-opacity="0.75" stroke-linejoin="round" stroke-linecap="round"/>
<path d="M800 438 C790 446 780 452 770 456 S756 470 750 480 S740 492 730 494 S700 490 686 492" fill="none" stroke="#22324f" stroke-width="0.80" stroke-opacity="0.75" stroke-linejoin="round" stroke-linecap="round"/>
<path d="M846 418 C838 430 834 446 830 460 S822 480 816 490 S810 500 806 510" fill="none" stroke="#22324f" stroke-width="0.80" stroke-opacity="0.75" stroke-linejoin="round" stroke-linecap="round"/>
<path d="M846 418 C852 440 858 460 866 480 S876 500 880 520 S886 540 890 560" fill="none" stroke="#22324f" stroke-width="0.80" stroke-opacity="0.75" stroke-linejoin="round" stroke-linecap="round"/>
<path d="M846 418 C830 416 818 420 806 426 S790 432 780 430 S762 410 756 404" fill="none" stroke="#22324f" stroke-width="0.80" stroke-opacity="0.75" stroke-linejoin="round" stroke-linecap="round"/>
<path d="M826 518 C840 530 850 540 856 552 S866 570 870 580 S880 590 890 596" fill="none" stroke="#22324f" stroke-width="0.80" stroke-opacity="0.75" stroke-linejoin="round" stroke-linecap="round"/>
<path d="M686 540 C696 546 706 548 716 548 S740 552 750 560 S770 580 780 590" fill="none" stroke="#22324f" stroke-width="0.80" stroke-opacity="0.75" stroke-linejoin="round" stroke-linecap="round"/>
<path d="M698 624 C710 626 720 628 736 627 S760 626 772 628" fill="none" stroke="#22324f" stroke-width="0.80" stroke-opacity="0.75" stroke-linejoin="round" stroke-linecap="round"/>
<path d="M698 624 C706 640 712 660 716 680 S722 720 726 760" fill="none" stroke="#22324f" stroke-width="0.80" stroke-opacity="0.75" stroke-linejoin="round" stroke-linecap="round"/>
<path d="M520 712 C524 730 526 745 528 759 M528 759 C540 756 552 752 561 746 M431 698 C440 710 446 720 448 740 S452 770 456 788" fill="none" stroke="#22324f" stroke-width="0.80" stroke-opacity="0.75" stroke-linejoin="round" stroke-linecap="round"/>
<path d="M503 696 C512 704 518 708 520 712 M313 720 C330 722 350 720 370 722 S410 716 431 698" fill="none" stroke="#22324f" stroke-width="0.80" stroke-opacity="0.75" stroke-linejoin="round" stroke-linecap="round"/>
<path d="M431 698 C450 700 470 698 503 696 S540 700 560 706 S600 712 640 706 S670 700 690 696" fill="none" stroke="#22324f" stroke-width="0.80" stroke-opacity="0.75" stroke-linejoin="round" stroke-linecap="round"/>
<path d="M240 150 C252 130 270 120 290 112 S330 100 350 98 S380 92 405 80 S430 64 450 60 S470 56 480 54" fill="none" stroke="#22324f" stroke-width="0.80" stroke-opacity="0.75" stroke-linejoin="round" stroke-linecap="round"/>
<path d="M274 100 C290 104 310 108 330 106 S350 100 360 92 S390 84 405 70" fill="none" stroke="#22324f" stroke-width="0.80" stroke-opacity="0.75" stroke-linejoin="round" stroke-linecap="round"/>
<path d="M240 176 C260 160 280 150 300 146 S330 136 344 132 S380 126 400 122 S440 112 470 104" fill="none" stroke="#22324f" stroke-width="0.80" stroke-opacity="0.75" stroke-linejoin="round" stroke-linecap="round"/>
<path d="M312 188 C316 170 322 150 336 134 M348 130 C352 110 350 98 356 88" fill="none" stroke="#22324f" stroke-width="0.80" stroke-opacity="0.75" stroke-linejoin="round" stroke-linecap="round"/>
<path d="M386 188 C392 170 400 156 412 132 S430 110 450 96 S470 84 480 78" fill="none" stroke="#22324f" stroke-width="0.80" stroke-opacity="0.75" stroke-linejoin="round" stroke-linecap="round"/>
<path d="M480 78 C490 90 496 104 500 126 S510 150 520 168 S530 180 536 188" fill="none" stroke="#22324f" stroke-width="0.80" stroke-opacity="0.75" stroke-linejoin="round" stroke-linecap="round"/>
<path d="M480 78 C500 84 520 90 540 96 S560 110 566 122 S570 130 556 140 S545 160 540 188" fill="none" stroke="#22324f" stroke-width="0.80" stroke-opacity="0.75" stroke-linejoin="round" stroke-linecap="round"/>
<path d="M480 78 C470 60 466 50 462 43 M480 78 C496 66 510 56 520 43 M480 78 C510 74 540 66 560 60 S580 50 591 48" fill="none" stroke="#22324f" stroke-width="0.80" stroke-opacity="0.75" stroke-linejoin="round" stroke-linecap="round"/>
<path d="M440 132 C460 138 480 140 500 140 S540 142 560 144 S580 146 591 146" fill="none" stroke="#22324f" stroke-width="0.80" stroke-opacity="0.75" stroke-linejoin="round" stroke-linecap="round"/>
<path d="M455 100 C452 120 450 140 452 160 S456 180 458 188" fill="none" stroke="#22324f" stroke-width="0.80" stroke-opacity="0.75" stroke-linejoin="round" stroke-linecap="round"/>
<path d="M866 646 C820 640 780 650 740 660 S700 670 686 672" fill="none" stroke="#6b6a4a" stroke-width="0.80" stroke-opacity="0.45" stroke-linejoin="round" stroke-linecap="round"/>
<path d="M800 438 C780 470 760 500 740 520 S700 540 686 548" fill="none" stroke="#6b6a4a" stroke-width="0.80" stroke-opacity="0.45" stroke-linejoin="round" stroke-linecap="round"/>
<path d="M846 418 C820 440 790 460 760 470 S720 480 690 470" fill="none" stroke="#6b6a4a" stroke-width="0.80" stroke-opacity="0.45" stroke-linejoin="round" stroke-linecap="round"/>
<path d="M866 646 C840 690 800 720 760 740 S700 770 660 780 S600 770 560 760" fill="none" stroke="#6b6a4a" stroke-width="0.80" stroke-opacity="0.45" stroke-linejoin="round" stroke-linecap="round"/>
<path d="M431 698 C470 720 500 740 528 759 S580 770 620 760" fill="none" stroke="#6b6a4a" stroke-width="0.80" stroke-opacity="0.45" stroke-linejoin="round" stroke-linecap="round"/>
<path d="M240 140 C280 140 320 150 360 150 S420 150 460 140 S520 130 560 130" fill="none" stroke="#6b6a4a" stroke-width="0.80" stroke-opacity="0.45" stroke-linejoin="round" stroke-linecap="round"/>
<path d="M300 60 C330 80 350 100 360 120 S380 160 400 188" fill="none" stroke="#6b6a4a" stroke-width="0.80" stroke-opacity="0.45" stroke-linejoin="round" stroke-linecap="round"/>
<path d="M866 646 C900 630 910 610 916 600" fill="none" stroke="#6b6a4a" stroke-width="0.80" stroke-opacity="0.45" stroke-linejoin="round" stroke-linecap="round"/>
<g transform="translate(363.0 136.4) rotate(0)"><circle r="4.8" fill="#1e1e94"/><rect x="-4.3" y="-1.5" width="8.6" height="3" fill="#a6a6fc"/></g>
<g transform="translate(387.0 125.6) rotate(90)"><circle r="6.3" fill="#4a4ad4"/><circle r="4.6" fill="#1e1e94"/><rect x="-4.1" y="-1.5" width="8.2" height="3" fill="#a6a6fc"/></g>
<g transform="translate(552.4 87.4) rotate(90)"><circle r="4.8" fill="#1e1e94"/><rect x="-4.3" y="-1.5" width="8.6" height="3" fill="#a6a6fc"/></g>
<g transform="translate(483.0 116.4) rotate(-15)"><circle r="4.8" fill="#a6a6fc"/><rect x="-3.8" y="-2.6" width="7.7" height="1.4" fill="#1e1e94"/><rect x="-3.8" y="1.2" width="7.7" height="1.4" fill="#1e1e94"/><circle r="4.8" fill="none" stroke="#1e1e94" stroke-width=".6"/></g>
<g transform="translate(555.0 121.0) rotate(-25)"><circle r="4.8" fill="#1e1e94"/><rect x="-4.3" y="-1.5" width="8.6" height="3" fill="#a6a6fc"/></g>
<g transform="translate(800.6 437.2) rotate(-50)"><circle r="4.6" fill="#1e1e94"/><rect x="-4.1" y="-1.5" width="8.2" height="3" fill="#a6a6fc"/></g>
<g transform="translate(861.4 420.0) rotate(15)"><circle r="4.4" fill="#1e1e94"/><rect x="-3.9" y="-1.5" width="7.8" height="3" fill="#a6a6fc"/></g>
<g transform="translate(826.2 518.0) rotate(20)"><circle r="4.8" fill="#1e1e94"/><rect x="-4.3" y="-1.5" width="8.6" height="3" fill="#a6a6fc"/></g>
<g transform="translate(689.5 542.2) rotate(-50)"><circle r="4.8" fill="#a6a6fc"/><rect x="-3.8" y="-2.6" width="7.7" height="1.4" fill="#1e1e94"/><rect x="-3.8" y="1.2" width="7.7" height="1.4" fill="#1e1e94"/><circle r="4.8" fill="none" stroke="#1e1e94" stroke-width=".6"/></g>
<g transform="translate(889.8 559.8) rotate(-20)"><circle r="6.5" fill="#4a4ad4"/><circle r="4.8" fill="#1e1e94"/><rect x="-4.3" y="-1.5" width="8.6" height="3" fill="#a6a6fc"/></g>
<g transform="translate(820.2 600.6) rotate(-50)"><circle r="4.6" fill="#1e1e94"/><rect x="-4.1" y="-1.5" width="8.2" height="3" fill="#a6a6fc"/></g>
<g transform="translate(698.8 624.4) rotate(-60)"><circle r="4.8" fill="#1e1e94"/><rect x="-4.3" y="-1.5" width="8.6" height="3" fill="#a6a6fc"/></g>
<g transform="translate(708.9 654.0) rotate(35)"><circle r="4.8" fill="#1e1e94"/><rect x="-4.3" y="-1.5" width="8.6" height="3" fill="#a6a6fc"/></g>
<g transform="translate(832.0 676.2) rotate(40)"><circle r="4.6" fill="#1e1e94"/><rect x="-4.1" y="-1.5" width="8.2" height="3" fill="#a6a6fc"/></g>
<g transform="translate(850.4 673.4) rotate(35)"><circle r="4.6" fill="#1e1e94"/><rect x="-4.1" y="-1.5" width="8.2" height="3" fill="#a6a6fc"/></g>
<g transform="translate(879.0 678.7) rotate(-20)"><circle r="6.3" fill="#4a4ad4"/><circle r="4.6" fill="#1e1e94"/><rect x="-4.1" y="-1.5" width="8.2" height="3" fill="#a6a6fc"/></g>
<g transform="translate(313.5 720.0) rotate(-35)"><circle r="4.6" fill="#a6a6fc"/><rect x="-3.7" y="-2.6" width="7.4" height="1.4" fill="#1e1e94"/><rect x="-3.7" y="1.2" width="7.4" height="1.4" fill="#1e1e94"/><circle r="4.6" fill="none" stroke="#1e1e94" stroke-width=".6"/></g>
<g transform="translate(431.2 698.2) rotate(-30)"><circle r="4.8" fill="#a6a6fc"/><rect x="-3.8" y="-2.6" width="7.7" height="1.4" fill="#1e1e94"/><rect x="-3.8" y="1.2" width="7.7" height="1.4" fill="#1e1e94"/><circle r="4.8" fill="none" stroke="#1e1e94" stroke-width=".6"/></g>
<g transform="translate(503.2 696.0) rotate(-60)"><circle r="4.8" fill="#a6a6fc"/><rect x="-3.8" y="-2.6" width="7.7" height="1.4" fill="#1e1e94"/><rect x="-3.8" y="1.2" width="7.7" height="1.4" fill="#1e1e94"/><circle r="4.8" fill="none" stroke="#1e1e94" stroke-width=".6"/></g>
<g transform="translate(520.3 712.2) rotate(-20)"><circle r="4.8" fill="#a6a6fc"/><rect x="-3.8" y="-2.6" width="7.7" height="1.4" fill="#1e1e94"/><rect x="-3.8" y="1.2" width="7.7" height="1.4" fill="#1e1e94"/><circle r="4.8" fill="none" stroke="#1e1e94" stroke-width=".6"/></g>
<g transform="translate(528.4 759.0) rotate(-30)"><circle r="6.3" fill="#4a4ad4"/><circle r="4.6" fill="#1e1e94"/><rect x="-4.1" y="-1.5" width="8.2" height="3" fill="#a6a6fc"/></g>
<g transform="translate(552.5 750.6) rotate(-30)"><circle r="4.4" fill="#a6a6fc"/><rect x="-3.5" y="-2.6" width="7.0" height="1.4" fill="#1e1e94"/><rect x="-3.5" y="1.2" width="7.0" height="1.4" fill="#1e1e94"/><circle r="4.4" fill="none" stroke="#1e1e94" stroke-width=".6"/></g>
<g transform="translate(561.4 745.9) rotate(0)"><circle r="4.6" fill="#a6a6fc"/><rect x="-3.7" y="-2.6" width="7.4" height="1.4" fill="#1e1e94"/><rect x="-3.7" y="1.2" width="7.4" height="1.4" fill="#1e1e94"/><circle r="4.6" fill="none" stroke="#1e1e94" stroke-width=".6"/></g>
<g transform="translate(570.4 754.3) rotate(60)"><circle r="4.6" fill="#1e1e94"/><rect x="-4.1" y="-1.5" width="8.2" height="3" fill="#a6a6fc"/></g>
<text class="lb" x="396.0" y="117.6" fill="#9899f3" stroke="#9899f3" stroke-width="0.30" textLength="45.0" lengthAdjust="spacingAndGlyphs">Farnborough</text>
<text class="lb" x="372.0" y="128.0" fill="#9899f3" stroke="#9899f3" stroke-width="0.30" textLength="25.0" lengthAdjust="spacingAndGlyphs">Odiham</text>
<text class="sm" x="467.0" y="73.5" fill="#1d2596" stroke="#1d2596" stroke-width="0.15" textLength="17.0" lengthAdjust="spacingAndGlyphs">London</text>
<text class="lb" x="491.6" y="109.0" fill="#9899f3" stroke="#9899f3" stroke-width="0.30" textLength="24.5" lengthAdjust="spacingAndGlyphs">Kenley</text>
<text class="lb" x="501.6" y="187.8" fill="#9899f3" stroke="#9899f3" stroke-width="0.30" textLength="27.0" lengthAdjust="spacingAndGlyphs">Chailey</text>
<text class="sm" x="834.5" y="418.8" fill="#1d2596" stroke="#1d2596" stroke-width="0.15" textLength="19.0" lengthAdjust="spacingAndGlyphs">Amiens</text>
<text class="lb" x="808.9" y="429.0" fill="#9899f3" stroke="#9899f3" stroke-width="0.30" textLength="15.0" lengthAdjust="spacingAndGlyphs">Poix</text>
<text class="lb" x="677.0" y="421.4" fill="#9899f3" stroke="#9899f3" stroke-width="0.30" textLength="43.0" lengthAdjust="spacingAndGlyphs">Saint-Aubin</text>
<text class="lb" x="834.5" y="510.5" fill="#9899f3" stroke="#9899f3" stroke-width="0.30" textLength="51.0" lengthAdjust="spacingAndGlyphs">Beauvais-Tille</text>
<text class="lb" x="697.6" y="533.7" fill="#9899f3" stroke="#9899f3" stroke-width="0.30" textLength="42.7" lengthAdjust="spacingAndGlyphs">Rouen-Boos</text>
<text class="lb" x="897.3" y="551.5" fill="#9899f3" stroke="#9899f3" stroke-width="0.30" textLength="18.0" lengthAdjust="spacingAndGlyphs">Creil</text>
<text class="lb" x="828.2" y="593.0" fill="#9899f3" stroke="#9899f3" stroke-width="0.30" textLength="73.4" lengthAdjust="spacingAndGlyphs">Cormeilles-en-Vexin</text>
<text class="lb" x="707.1" y="616.4" fill="#9899f3" stroke="#9899f3" stroke-width="0.30" textLength="25.0" lengthAdjust="spacingAndGlyphs">Evreux</text>
<text class="lb" x="644.0" y="602.6" fill="#9899f3" stroke="#9899f3" stroke-width="0.30" textLength="70.5" lengthAdjust="spacingAndGlyphs">Beaumont-le-Roger</text>
<text class="lb" x="671.0" y="638.2" fill="#9899f3" stroke="#9899f3" stroke-width="0.30" textLength="30.4" lengthAdjust="spacingAndGlyphs">Conches</text>
<text class="lb" x="717.2" y="645.8" fill="#9899f3" stroke="#9899f3" stroke-width="0.30" textLength="77.8" lengthAdjust="spacingAndGlyphs">Saint-Andre-de-lEure</text>
<text class="sm" x="864.7" y="654.5" fill="#1d2596" stroke="#1d2596" stroke-width="0.15" textLength="12.0" lengthAdjust="spacingAndGlyphs">Paris</text>
<text class="lb" x="858.9" y="664.9" fill="#9899f3" stroke="#9899f3" stroke-width="0.30" textLength="44.7" lengthAdjust="spacingAndGlyphs">Villacoublay</text>
<text class="lb" x="840.8" y="667.9" fill="#9899f3" stroke="#9899f3" stroke-width="0.30" textLength="41.2" lengthAdjust="spacingAndGlyphs">Guyancourt</text>
<text class="lb" x="888.0" y="671.0" fill="#9899f3" stroke="#9899f3" stroke-width="0.30" textLength="14.0" lengthAdjust="spacingAndGlyphs">Orly</text>
<text class="sm" x="861.0" y="578.0" fill="#1d2596" stroke="#1d2596" stroke-width="0.15">DQ</text>
<text class="sm" x="872.0" y="781.5" fill="#1d2596" stroke="#1d2596" stroke-width="0.15">DP</text>
<text class="sm" x="337.0" y="778.0" fill="#1d2596" stroke="#1d2596" stroke-width="0.15">XT</text>
<text class="lb" x="321.5" y="712.5" fill="#9899f3" stroke="#9899f3" stroke-width="0.30" textLength="105.0" lengthAdjust="spacingAndGlyphs">Avranches Le Val-Saint-Pere</text>
<text class="sm" x="382.0" y="708.5" fill="#1d2596" stroke="#1d2596" stroke-width="0.15" textLength="63.0" lengthAdjust="spacingAndGlyphs">St.Georges des Landes</text>
<text class="sm" x="506.8" y="702.0" fill="#1d2596" stroke="#1d2596" stroke-width="0.15" textLength="21.0" lengthAdjust="spacingAndGlyphs">Argentan</text>
<text class="lb" x="529.2" y="704.4" fill="#9899f3" stroke="#9899f3" stroke-width="0.30" textLength="23.8" lengthAdjust="spacingAndGlyphs">Vrigny</text>
<text class="sm" x="567.0" y="705.8" fill="#1d2596" stroke="#1d2596" stroke-width="0.15" textLength="24.0" lengthAdjust="spacingAndGlyphs">Planches</text>
<text class="lb" x="569.8" y="738.0" fill="#9899f3" stroke="#9899f3" stroke-width="0.30" textLength="20.0" lengthAdjust="spacingAndGlyphs">Essay</text>
<text class="lb" x="560.9" y="742.4" fill="#9899f3" stroke="#9899f3" stroke-width="0.30" textLength="35.0" lengthAdjust="spacingAndGlyphs">Hauterive</text>
<text class="lb" x="578.8" y="747.0" fill="#9899f3" stroke="#9899f3" stroke-width="0.30" textLength="27.4" lengthAdjust="spacingAndGlyphs">Barville</text>
<text class="lb" x="537.0" y="750.6" fill="#9899f3" stroke="#9899f3" stroke-width="0.30" textLength="22.0" lengthAdjust="spacingAndGlyphs">Lonrai</text>
<text class="lb" x="237.0" y="764.0" fill="#9899f3" stroke="#9899f3" stroke-width="0.30" textLength="30.0" lengthAdjust="spacingAndGlyphs">Trelivan</text>
</g>
<g clip-path="url(#cg)">
<rect x="230" y="186" width="460" height="510" fill="#3f6102"/>
<use href="#lands" fill="#385303"/>
<use href="#grid" stroke="#0a1400" stroke-opacity=".45" stroke-width=".8"/>
<polygon points="529.0,519.0 533.0,516.0 540.0,518.0 545.0,521.0 538.0,524.0 531.0,523.0" fill="#7a4a0c" fill-opacity="0.60"/>
<polygon points="458.0,594.0 463.0,592.0 468.0,595.0 465.0,600.0 459.0,599.0" fill="#6a4a0e" fill-opacity="0.60"/>
<polygon points="271.0,495.0 276.0,493.0 280.0,496.0 275.0,499.0" fill="#5f4a0c" fill-opacity="0.60"/>
<polygon points="300.0,232.0 306.0,229.0 310.0,233.0 304.0,236.0" fill="#6a4e0c" fill-opacity="0.60"/>
<polygon points="365.0,226.0 371.0,224.0 373.0,229.0 367.0,230.0" fill="#6a4e0c" fill-opacity="0.60"/>
<polygon points="398.0,230.0 404.0,227.0 408.0,231.0 401.0,233.0" fill="#7a4a0c" fill-opacity="0.60"/>
<polygon points="444.0,228.0 452.0,226.0 454.0,230.0 446.0,231.0" fill="#7a4a0c" fill-opacity="0.60"/>
<polygon points="523.0,236.0 528.0,233.0 531.0,238.0 526.0,240.0" fill="#6a4e0c" fill-opacity="0.60"/>
<polygon points="257.0,249.0 262.0,246.0 265.0,250.0 259.0,252.0" fill="#7a5a0c" fill-opacity="0.60"/>
<polygon points="596.0,527.0 600.0,525.0 602.0,529.0 597.0,530.0" fill="#6a4a0e" fill-opacity="0.60"/>
<polygon points="558.0,236.0 566.0,234.0 568.0,238.0 560.0,239.0" fill="#7a4a0c" fill-opacity="0.60"/>
<polygon points="672.0,527.0 677.0,525.0 679.0,529.0 673.0,530.0" fill="#6a4a0e" fill-opacity="0.60"/>
<polygon points="666.0,420.0 671.0,417.0 674.0,421.0 668.0,424.0" fill="#7a4a0c" fill-opacity="0.60"/>
<path d="M275 497 C285 510 292 520 300 532 S312 548 322 556 S340 566 352 572 S366 590 372 588" fill="none" stroke="#1d2a06" stroke-width="0.80" stroke-opacity="0.60" stroke-linejoin="round" stroke-linecap="round"/>
<path d="M372 588 C380 586 390 584 400 586 S420 590 440 594 S455 598 463 597" fill="none" stroke="#1d2a06" stroke-width="0.80" stroke-opacity="0.60" stroke-linejoin="round" stroke-linecap="round"/>
<path d="M463 597 C475 600 490 606 505 612 S530 616 545 606 S560 604 575 610 S590 618 600 616" fill="none" stroke="#1d2a06" stroke-width="0.80" stroke-opacity="0.60" stroke-linejoin="round" stroke-linecap="round"/>
<path d="M600 616 C615 614 630 618 645 622 S670 628 685 630" fill="none" stroke="#1d2a06" stroke-width="0.80" stroke-opacity="0.60" stroke-linejoin="round" stroke-linecap="round"/>
<path d="M463 597 C456 615 450 630 446 650 S438 680 432 693" fill="none" stroke="#1d2a06" stroke-width="0.80" stroke-opacity="0.60" stroke-linejoin="round" stroke-linecap="round"/>
<path d="M463 597 C470 620 476 640 480 660 S488 680 496 693" fill="none" stroke="#1d2a06" stroke-width="0.80" stroke-opacity="0.60" stroke-linejoin="round" stroke-linecap="round"/>
<path d="M505 612 C510 630 514 650 512 670 S508 686 510 693" fill="none" stroke="#1d2a06" stroke-width="0.80" stroke-opacity="0.60" stroke-linejoin="round" stroke-linecap="round"/>
<path d="M533 521 C545 526 560 528 575 524 S600 520 620 524 S650 530 674 527" fill="none" stroke="#1d2a06" stroke-width="0.80" stroke-opacity="0.60" stroke-linejoin="round" stroke-linecap="round"/>
<path d="M541 544 C550 560 556 580 548 604" fill="none" stroke="#1d2a06" stroke-width="0.80" stroke-opacity="0.60" stroke-linejoin="round" stroke-linecap="round"/>
<path d="M600 616 C596 600 590 585 584 570 S580 556 583 548" fill="none" stroke="#1d2a06" stroke-width="0.80" stroke-opacity="0.60" stroke-linejoin="round" stroke-linecap="round"/>
<path d="M674 527 C668 545 660 560 650 575 S640 600 636 612" fill="none" stroke="#1d2a06" stroke-width="0.80" stroke-opacity="0.60" stroke-linejoin="round" stroke-linecap="round"/>
<path d="M636 612 C645 625 655 635 662 646 S675 665 685 672" fill="none" stroke="#1d2a06" stroke-width="0.80" stroke-opacity="0.60" stroke-linejoin="round" stroke-linecap="round"/>
<path d="M347 621 C360 615 375 605 385 598 M347 621 C350 640 356 660 366 676 S372 690 374 693" fill="none" stroke="#1d2a06" stroke-width="0.80" stroke-opacity="0.60" stroke-linejoin="round" stroke-linecap="round"/>
<path d="M293 599 C300 610 320 618 347 621" fill="none" stroke="#1d2a06" stroke-width="0.80" stroke-opacity="0.60" stroke-linejoin="round" stroke-linecap="round"/>
<path d="M585 452 C590 470 596 490 600 505 S605 520 604 524" fill="none" stroke="#1d2a06" stroke-width="0.80" stroke-opacity="0.60" stroke-linejoin="round" stroke-linecap="round"/>
<path d="M651 425 C648 445 650 465 655 480 S665 510 674 527" fill="none" stroke="#1d2a06" stroke-width="0.80" stroke-opacity="0.60" stroke-linejoin="round" stroke-linecap="round"/>
<path d="M235 252 C250 256 262 252 275 250 S290 244 303 233 S320 226 340 228 S360 226 368 228" fill="none" stroke="#1d2a06" stroke-width="0.80" stroke-opacity="0.60" stroke-linejoin="round" stroke-linecap="round"/>
<path d="M368 228 C380 226 392 230 402 231 S430 230 448 229 S480 226 500 230 S520 236 527 237" fill="none" stroke="#1d2a06" stroke-width="0.80" stroke-opacity="0.60" stroke-linejoin="round" stroke-linecap="round"/>
<path d="M527 237 C540 234 552 236 562 237 S580 226 591 222" fill="none" stroke="#1d2a06" stroke-width="0.80" stroke-opacity="0.60" stroke-linejoin="round" stroke-linecap="round"/>
<path d="M303 233 C304 220 308 205 312 188 M402 231 C398 215 392 200 386 188 M448 229 C452 215 456 200 458 188 M527 237 C532 220 535 205 536 188" fill="none" stroke="#1d2a06" stroke-width="0.80" stroke-opacity="0.60" stroke-linejoin="round" stroke-linecap="round"/>
<path d="M566 517 C580 512 590 520 600 518 S612 510 620 516 S626 530 634 528 S640 514 648 516 S652 530 660 530 S668 524 674 527" fill="none" stroke="#4a6a14" stroke-width="1.00" stroke-opacity="0.80" stroke-linejoin="round" stroke-linecap="round"/>
<path d="M674 527 C678 534 680 540 686 542" fill="none" stroke="#4a6a14" stroke-width="1.00" stroke-opacity="0.80" stroke-linejoin="round" stroke-linecap="round"/>
<g fill="none" stroke="#222a08" stroke-width=".8"><circle cx="469.4" cy="530.2" r="6" fill="#4a5c0e"/><circle cx="469.4" cy="530.2" r="3.8"/><circle cx="469.4" cy="530.2" r="1.6"/></g>
<text class="sm" x="363.0" y="197.0" fill="#131b04" stroke="#131b04" stroke-width="0.15">XB</text>
<text class="sm" x="370.0" y="402.0" fill="#131b04" stroke="#131b04" stroke-width="0.15">XA</text>
<text class="sm" x="488.0" y="402.0" fill="#131b04" stroke="#131b04" stroke-width="0.15">YA</text>
<text class="sm" x="519.0" y="401.0" fill="#131b04" stroke="#131b04" stroke-width="0.15">BR</text>
<text class="sm" x="468.0" y="197.0" fill="#131b04" stroke="#131b04" stroke-width="0.15">BS</text>
<text class="sm" x="303.6" y="262.0" fill="#131b04" stroke="#131b04" stroke-width="0.15" textLength="22.0" lengthAdjust="spacingAndGlyphs">Newport</text>
<text class="sm" x="259.0" y="502.0" fill="#131b04" stroke="#131b04" stroke-width="0.15" textLength="30.0" lengthAdjust="spacingAndGlyphs">Cherbourg</text>
<text class="sm" x="314.2" y="495.5" fill="#131b04" stroke="#131b04" stroke-width="0.15" textLength="22.0" lengthAdjust="spacingAndGlyphs">Barfleur</text>
<text class="sm" x="298.0" y="514.4" fill="#131b04" stroke="#131b04" stroke-width="0.15" textLength="55.0" lengthAdjust="spacingAndGlyphs">St.Vaast la Hougue</text>
<text class="sm" x="234.0" y="530.0" fill="#131b04" stroke="#131b04" stroke-width="0.15" textLength="26.0" lengthAdjust="spacingAndGlyphs">Les Pieux</text>
<text class="sm" x="257.0" y="540.0" fill="#131b04" stroke="#131b04" stroke-width="0.15" textLength="31.0" lengthAdjust="spacingAndGlyphs">Bricquebec</text>
<text class="sm" x="239.0" y="548.0" fill="#131b04" stroke="#131b04" stroke-width="0.15" textLength="17.0" lengthAdjust="spacingAndGlyphs">Cuiule</text>
<text class="sm" x="292.0" y="537.0" fill="#131b04" stroke="#131b04" stroke-width="0.15" textLength="30.0" lengthAdjust="spacingAndGlyphs">Montebourg</text>
<text class="sm" x="301.0" y="548.0" fill="#131b04" stroke="#131b04" stroke-width="0.15" textLength="9.0" lengthAdjust="spacingAndGlyphs">Les</text>
<text class="sm" x="281.0" y="600.0" fill="#131b04" stroke="#131b04" stroke-width="0.15" textLength="12.0" lengthAdjust="spacingAndGlyphs">Lessay</text>
<text class="sm" x="349.0" y="549.0" fill="#131b04" stroke="#131b04" stroke-width="0.15" textLength="22.0" lengthAdjust="spacingAndGlyphs">Carentan</text>
<text class="sm" x="342.0" y="572.0" fill="#131b04" stroke="#131b04" stroke-width="0.15" textLength="16.0" lengthAdjust="spacingAndGlyphs">Isigny</text>
<text class="sm" x="385.0" y="565.0" fill="#131b04" stroke="#131b04" stroke-width="0.15" textLength="30.0" lengthAdjust="spacingAndGlyphs">Les Moutiers</text>
<text class="sm" x="388.0" y="586.0" fill="#131b04" stroke="#131b04" stroke-width="0.15" textLength="22.0" lengthAdjust="spacingAndGlyphs">Balleroy</text>
<text class="sm" x="373.6" y="605.0" fill="#131b04" stroke="#131b04" stroke-width="0.15">XV</text>
<text class="sm" x="347.0" y="621.0" fill="#131b04" stroke="#131b04" stroke-width="0.15" textLength="14.0" lengthAdjust="spacingAndGlyphs">St.Lo</text>
<text class="sm" x="257.0" y="625.0" fill="#131b04" stroke="#131b04" stroke-width="0.15" textLength="48.0" lengthAdjust="spacingAndGlyphs">Gouville sur Mer</text>
<text class="sm" x="284.0" y="670.0" fill="#131b04" stroke="#131b04" stroke-width="0.15" textLength="19.0" lengthAdjust="spacingAndGlyphs">Brehal</text>
<text class="sm" x="433.0" y="621.0" fill="#131b04" stroke="#131b04" stroke-width="0.15" textLength="19.0" lengthAdjust="spacingAndGlyphs">Evrecy</text>
<text class="sm" x="366.0" y="662.0" fill="#131b04" stroke="#131b04" stroke-width="0.15" textLength="29.0" lengthAdjust="spacingAndGlyphs">Sourdeval</text>
<text class="sm" x="380.0" y="680.0" fill="#131b04" stroke="#131b04" stroke-width="0.15" textLength="11.0" lengthAdjust="spacingAndGlyphs">Vire</text>
<text class="sm" x="484.4" y="576.0" fill="#131b04" stroke="#131b04" stroke-width="0.15" textLength="24.0" lengthAdjust="spacingAndGlyphs">Cabourg</text>
<text class="sm" x="436.0" y="578.0" fill="#131b04" stroke="#131b04" stroke-width="0.15" textLength="20.0" lengthAdjust="spacingAndGlyphs">Douvres</text>
<text class="sm" x="494.0" y="604.0" fill="#131b04" stroke="#131b04" stroke-width="0.15">YV</text>
<text class="sm" x="532.0" y="602.5" fill="#131b04" stroke="#131b04" stroke-width="0.15">BQ</text>
<text class="sm" x="541.6" y="605.0" fill="#131b04" stroke="#131b04" stroke-width="0.15" textLength="20.0" lengthAdjust="spacingAndGlyphs">Lisieux</text>
<text class="sm" x="652.7" y="593.0" fill="#131b04" stroke="#131b04" stroke-width="0.15">CQ</text>
<text class="sm" x="519.6" y="532.0" fill="#131b04" stroke="#131b04" stroke-width="0.15" textLength="25.5" lengthAdjust="spacingAndGlyphs">Le Havre</text>
<text class="sm" x="541.0" y="546.0" fill="#131b04" stroke="#131b04" stroke-width="0.15" textLength="4.0" lengthAdjust="spacingAndGlyphs">H</text>
<text class="sm" x="581.0" y="546.0" fill="#131b04" stroke="#131b04" stroke-width="0.15" textLength="31.0" lengthAdjust="spacingAndGlyphs">Pont-Audemer</text>
<text class="sm" x="667.5" y="532.6" fill="#131b04" stroke="#131b04" stroke-width="0.15" textLength="17.0" lengthAdjust="spacingAndGlyphs">Rouen</text>
<text class="sm" x="596.0" y="617.0" fill="#131b04" stroke="#131b04" stroke-width="0.15" textLength="18.0" lengthAdjust="spacingAndGlyphs">Bernay</text>
<text class="sm" x="680.2" y="629.4" fill="#131b04" stroke="#131b04" stroke-width="0.15" textLength="18.0" lengthAdjust="spacingAndGlyphs">Evreux</text>
<text class="sm" x="526.2" y="645.7" fill="#131b04" stroke="#131b04" stroke-width="0.15" textLength="32.0" lengthAdjust="spacingAndGlyphs">Heurtevent</text>
<text class="sm" x="480.2" y="668.0" fill="#131b04" stroke="#131b04" stroke-width="0.15" textLength="20.0" lengthAdjust="spacingAndGlyphs">Falaise</text>
<text class="sm" x="470.0" y="560.0" fill="#131b04" stroke="#131b04" stroke-width="0.15" textLength="10.0" lengthAdjust="spacingAndGlyphs">Lion</text>
<text class="sm" x="457.6" y="600.6" fill="#6a3c0a" stroke="#6a3c0a" stroke-width="0.15" textLength="14.0" lengthAdjust="spacingAndGlyphs">Caen</text>
<text class="lb" x="293.0" y="237.0" fill="#837e1a" stroke="#837e1a" stroke-width="0.30" textLength="32.0" lengthAdjust="spacingAndGlyphs">Lymington</text>
<text class="lb" x="304.0" y="234.3" fill="#837e1a" stroke="#837e1a" stroke-width="0.30" textLength="59.0" lengthAdjust="spacingAndGlyphs">Needs Oar Point</text>
<text class="lb" x="410.0" y="215.0" fill="#837e1a" stroke="#837e1a" stroke-width="0.30" textLength="32.0" lengthAdjust="spacingAndGlyphs">Tangmere</text>
<text class="lb" x="425.0" y="221.0" fill="#837e1a" stroke="#837e1a" stroke-width="0.30" textLength="16.0" lengthAdjust="spacingAndGlyphs">Ford</text>
<text class="lb" x="534.0" y="229.0" fill="#837e1a" stroke="#837e1a" stroke-width="0.30" textLength="25.0" lengthAdjust="spacingAndGlyphs">Friston</text>
<text class="lb" x="304.6" y="489.2" fill="#837e1a" stroke="#837e1a" stroke-width="0.30" textLength="38.4" lengthAdjust="spacingAndGlyphs">Maupertus</text>
<text class="lb" x="328.0" y="527.0" fill="#837e1a" stroke="#837e1a" stroke-width="0.30" textLength="27.6" lengthAdjust="spacingAndGlyphs">Azeville</text>
<text class="lb" x="305.2" y="537.2" fill="#837e1a" stroke="#837e1a" stroke-width="0.30" textLength="30.0" lengthAdjust="spacingAndGlyphs">Biniville</text>
<text class="lb" x="331.0" y="540.2" fill="#837e1a" stroke="#837e1a" stroke-width="0.30" textLength="36.0" lengthAdjust="spacingAndGlyphs">Beuzeville</text>
<text class="lb" x="314.2" y="546.8" fill="#837e1a" stroke="#837e1a" stroke-width="0.30" textLength="34.8" lengthAdjust="spacingAndGlyphs">Picauville</text>
<text class="lb" x="343.0" y="552.2" fill="#837e1a" stroke="#837e1a" stroke-width="0.30" textLength="38.0" lengthAdjust="spacingAndGlyphs">Brucheville</text>
<text class="lb" x="372.0" y="552.2" fill="#837e1a" stroke="#837e1a" stroke-width="0.30" textLength="74.0" lengthAdjust="spacingAndGlyphs">Cricqueville-en-Bessin</text>
<text class="lb" x="319.0" y="559.8" fill="#837e1a" stroke="#837e1a" stroke-width="0.30" textLength="37.0" lengthAdjust="spacingAndGlyphs">Cretteville</text>
<text class="lb" x="331.6" y="571.8" fill="#837e1a" stroke="#837e1a" stroke-width="0.30" textLength="27.6" lengthAdjust="spacingAndGlyphs">Meautis</text>
<text class="lb" x="301.0" y="591.6" fill="#837e1a" stroke="#837e1a" stroke-width="0.30" textLength="24.0" lengthAdjust="spacingAndGlyphs">Lessay</text>
<text class="lb" x="381.4" y="545.8" fill="#837e1a" stroke="#837e1a" stroke-width="0.30" textLength="76.2" lengthAdjust="spacingAndGlyphs">Saint Pierre du Mont</text>
<text class="lb" x="372.0" y="556.4" fill="#837e1a" stroke="#837e1a" stroke-width="0.30" textLength="46.0" lengthAdjust="spacingAndGlyphs">Deux Jumeaux</text>
<text class="lb" x="420.0" y="556.0" fill="#837e1a" stroke="#837e1a" stroke-width="0.30" textLength="60.0" lengthAdjust="spacingAndGlyphs">Longues-Sur-Mer</text>
<text class="lb" x="447.0" y="560.6" fill="#837e1a" stroke="#837e1a" stroke-width="0.30" textLength="75.6" lengthAdjust="spacingAndGlyphs">Sainte-Croix-sur-Mer</text>
<text class="lb" x="425.0" y="565.0" fill="#837e1a" stroke="#837e1a" stroke-width="0.30" textLength="40.0" lengthAdjust="spacingAndGlyphs">Sommervieu</text>
<text class="lb" x="466.0" y="565.0" fill="#837e1a" stroke="#837e1a" stroke-width="0.30" textLength="48.0" lengthAdjust="spacingAndGlyphs">Beny-Sur-Mer</text>
<text class="lb" x="445.0" y="570.4" fill="#837e1a" stroke="#837e1a" stroke-width="0.30" textLength="33.0" lengthAdjust="spacingAndGlyphs">Lantheuil</text>
<text class="lb" x="393.4" y="575.0" fill="#837e1a" stroke="#837e1a" stroke-width="0.30" textLength="31.6" lengthAdjust="spacingAndGlyphs">Le Molay</text>
<text class="lb" x="439.0" y="575.0" fill="#837e1a" stroke="#837e1a" stroke-width="0.30" textLength="42.0" lengthAdjust="spacingAndGlyphs">Rucqueville</text>
<text class="lb" x="380.2" y="580.2" fill="#837e1a" stroke="#837e1a" stroke-width="0.30" textLength="34.0" lengthAdjust="spacingAndGlyphs">Chippelle</text>
<text class="lb" x="407.8" y="593.8" fill="#837e1a" stroke="#837e1a" stroke-width="0.30" textLength="40.2" lengthAdjust="spacingAndGlyphs">Lignerolles</text>
<text class="lb" x="457.6" y="591.0" fill="#837e1a" stroke="#837e1a" stroke-width="0.30" textLength="35.4" lengthAdjust="spacingAndGlyphs">Carpiquet</text>
<text class="lb" x="547.0" y="546.6" fill="#837e1a" stroke="#837e1a" stroke-width="0.30" textLength="34.0" lengthAdjust="spacingAndGlyphs">Deauville</text>
<text class="lb" x="591.0" y="550.6" fill="#837e1a" stroke="#837e1a" stroke-width="0.30" textLength="39.7" lengthAdjust="spacingAndGlyphs">Triqueville</text>
<text class="lb" x="677.0" y="421.4" fill="#837e1a" stroke="#837e1a" stroke-width="0.30" textLength="43.0" lengthAdjust="spacingAndGlyphs">Saint-Aubin</text>
<text class="lb" x="572.0" y="459.0" fill="#837e1a" stroke="#837e1a" stroke-width="0.30" textLength="69.0" lengthAdjust="spacingAndGlyphs">Fecamp-Benouville</text>
<text class="lb" x="614.6" y="602.3" fill="#837e1a" stroke="#837e1a" stroke-width="0.30" textLength="72.0" lengthAdjust="spacingAndGlyphs">Bernay Saint Martin</text>
<text class="lb" x="601.0" y="623.2" fill="#837e1a" stroke="#837e1a" stroke-width="0.30" textLength="25.3" lengthAdjust="spacingAndGlyphs">Broglie</text>
<text class="lb" x="671.0" y="638.2" fill="#837e1a" stroke="#837e1a" stroke-width="0.30" textLength="30.4" lengthAdjust="spacingAndGlyphs">Conches</text>
<text class="lb" x="504.0" y="671.4" fill="#837e1a" stroke="#837e1a" stroke-width="0.30" textLength="20.0" lengthAdjust="spacingAndGlyphs">Ronai</text>
<text class="lb" x="524.2" y="682.6" fill="#837e1a" stroke="#837e1a" stroke-width="0.30" textLength="33.6" lengthAdjust="spacingAndGlyphs">Argentan</text>
<text class="lb" x="512.4" y="687.0" fill="#837e1a" stroke="#837e1a" stroke-width="0.30" textLength="23.0" lengthAdjust="spacingAndGlyphs">Goulet</text>
<text class="lb" x="440.2" y="690.4" fill="#837e1a" stroke="#837e1a" stroke-width="0.30" textLength="17.0" lengthAdjust="spacingAndGlyphs">Flers</text>
<g transform="translate(296.2 497.6) rotate(5)"><circle r="4.8" fill="#1c1a08"/><rect x="-4.3" y="-1.5" width="8.6" height="3" fill="#cdbb3a"/></g>
<g transform="translate(296.2 545.4) rotate(20)"><circle r="4.8" fill="#cdbb3a"/><rect x="-3.8" y="-2.6" width="7.7" height="1.4" fill="#1c1a08"/><rect x="-3.8" y="1.2" width="7.7" height="1.4" fill="#1c1a08"/><circle r="4.8" fill="none" stroke="#1c1a08" stroke-width=".6"/></g>
<g transform="translate(305.4 554.6) rotate(10)"><circle r="4.8" fill="#1c1a08"/><rect x="-4.3" y="-1.5" width="8.6" height="3" fill="#cdbb3a"/></g>
<g transform="translate(322.0 549.4) rotate(-35)"><circle r="4.8" fill="#1c1a08"/><rect x="-4.3" y="-1.5" width="8.6" height="3" fill="#cdbb3a"/></g>
<g transform="translate(318.4 536.0) rotate(-20)"><circle r="4.8" fill="#cdbb3a"/><rect x="-3.8" y="-2.6" width="7.7" height="1.4" fill="#1c1a08"/><rect x="-3.8" y="1.2" width="7.7" height="1.4" fill="#1c1a08"/><circle r="4.8" fill="none" stroke="#1c1a08" stroke-width=".6"/></g>
<g transform="translate(310.6 568.6) rotate(25)"><circle r="4.8" fill="#1c1a08"/><rect x="-4.3" y="-1.5" width="8.6" height="3" fill="#cdbb3a"/></g>
<g transform="translate(334.6 561.0) rotate(-15)"><circle r="4.8" fill="#cdbb3a"/><rect x="-3.8" y="-2.6" width="7.7" height="1.4" fill="#1c1a08"/><rect x="-3.8" y="1.2" width="7.7" height="1.4" fill="#1c1a08"/><circle r="4.8" fill="none" stroke="#1c1a08" stroke-width=".6"/></g>
<g transform="translate(322.3 580.2) rotate(0)"><circle r="4.8" fill="#cdbb3a"/><rect x="-3.8" y="-2.6" width="7.7" height="1.4" fill="#1c1a08"/><rect x="-3.8" y="1.2" width="7.7" height="1.4" fill="#1c1a08"/><circle r="4.8" fill="none" stroke="#1c1a08" stroke-width=".6"/></g>
<g transform="translate(293.0 599.0) rotate(-15)"><circle r="4.8" fill="#1c1a08"/><rect x="-4.3" y="-1.5" width="8.6" height="3" fill="#cdbb3a"/></g>
<g transform="translate(358.0 564.0) rotate(60)"><circle r="4.4" fill="#1c1a08"/><rect x="-3.9" y="-1.5" width="7.8" height="3" fill="#cdbb3a"/></g>
<g transform="translate(371.2 564.6) rotate(30)"><circle r="4.2" fill="#1c1a08"/><rect x="-3.7" y="-1.5" width="7.4" height="3" fill="#cdbb3a"/></g>
<g transform="translate(372.4 553.0) rotate(20)"><circle r="4.0" fill="#1c1a08"/><rect x="-3.5" y="-1.5" width="7.0" height="3" fill="#cdbb3a"/></g>
<g transform="translate(365.2 560.4) rotate(90)"><circle r="6.3" fill="#6e6a1a"/><circle r="4.6" fill="#1c1a08"/><rect x="-4.1" y="-1.5" width="8.2" height="3" fill="#cdbb3a"/></g>
<g transform="translate(385.0 560.4) rotate(5)"><circle r="4.8" fill="#cdbb3a"/><rect x="-3.8" y="-2.6" width="7.7" height="1.4" fill="#1c1a08"/><rect x="-3.8" y="1.2" width="7.7" height="1.4" fill="#1c1a08"/><circle r="4.8" fill="none" stroke="#1c1a08" stroke-width=".6"/></g>
<g transform="translate(371.8 588.0) rotate(-15)"><circle r="4.8" fill="#1c1a08"/><rect x="-4.3" y="-1.5" width="8.6" height="3" fill="#cdbb3a"/></g>
<g transform="translate(385.0 583.8) rotate(-50)"><circle r="4.8" fill="#1c1a08"/><rect x="-4.3" y="-1.5" width="8.6" height="3" fill="#cdbb3a"/></g>
<g transform="translate(398.5 602.6) rotate(10)"><circle r="4.8" fill="#1c1a08"/><rect x="-4.3" y="-1.5" width="8.6" height="3" fill="#cdbb3a"/></g>
<g transform="translate(410.2 564.2) rotate(10)"><circle r="4.8" fill="#cdbb3a"/><rect x="-3.8" y="-2.6" width="7.7" height="1.4" fill="#1c1a08"/><rect x="-3.8" y="1.2" width="7.7" height="1.4" fill="#1c1a08"/><circle r="4.8" fill="none" stroke="#1c1a08" stroke-width=".6"/></g>
<g transform="translate(416.2 573.4) rotate(0)"><circle r="4.4" fill="#1c1a08"/><rect x="-3.9" y="-1.5" width="7.8" height="3" fill="#cdbb3a"/></g>
<g transform="translate(431.2 572.8) rotate(-35)"><circle r="4.8" fill="#1c1a08"/><rect x="-4.3" y="-1.5" width="8.6" height="3" fill="#cdbb3a"/></g>
<g transform="translate(438.7 568.6) rotate(0)"><circle r="4.2" fill="#1c1a08"/><rect x="-3.7" y="-1.5" width="7.4" height="3" fill="#cdbb3a"/></g>
<g transform="translate(435.8 580.0) rotate(-25)"><circle r="4.8" fill="#1c1a08"/><rect x="-4.3" y="-1.5" width="8.6" height="3" fill="#cdbb3a"/></g>
<g transform="translate(429.7 584.8) rotate(5)"><circle r="4.8" fill="#1c1a08"/><rect x="-4.3" y="-1.5" width="8.6" height="3" fill="#cdbb3a"/></g>
<g transform="translate(449.0 601.4) rotate(20)"><circle r="4.8" fill="#1c1a08"/><rect x="-4.3" y="-1.5" width="8.6" height="3" fill="#cdbb3a"/></g>
<g transform="translate(537.9 555.0) rotate(15)"><circle r="4.8" fill="#cdbb3a"/><rect x="-3.8" y="-2.6" width="7.7" height="1.4" fill="#1c1a08"/><rect x="-3.8" y="1.2" width="7.7" height="1.4" fill="#1c1a08"/><circle r="4.8" fill="none" stroke="#1c1a08" stroke-width=".6"/></g>
<g transform="translate(583.0 559.4) rotate(-70)"><circle r="4.8" fill="#cdbb3a"/><rect x="-3.8" y="-2.6" width="7.7" height="1.4" fill="#1c1a08"/><rect x="-3.8" y="1.2" width="7.7" height="1.4" fill="#1c1a08"/><circle r="4.8" fill="none" stroke="#1c1a08" stroke-width=".6"/></g>
<g transform="translate(606.5 610.7) rotate(90)"><circle r="6.3" fill="#6e6a1a"/><circle r="4.6" fill="#1c1a08"/><rect x="-4.1" y="-1.5" width="8.2" height="3" fill="#cdbb3a"/></g>
<g transform="translate(635.8 611.1) rotate(30)"><circle r="4.8" fill="#cdbb3a"/><rect x="-3.8" y="-2.6" width="7.7" height="1.4" fill="#1c1a08"/><rect x="-3.8" y="1.2" width="7.7" height="1.4" fill="#1c1a08"/><circle r="4.8" fill="none" stroke="#1c1a08" stroke-width=".6"/></g>
<g transform="translate(592.7 631.6) rotate(20)"><circle r="4.8" fill="#cdbb3a"/><rect x="-3.8" y="-2.6" width="7.7" height="1.4" fill="#1c1a08"/><rect x="-3.8" y="1.2" width="7.7" height="1.4" fill="#1c1a08"/><circle r="4.8" fill="none" stroke="#1c1a08" stroke-width=".6"/></g>
<g transform="translate(662.2 646.3) rotate(-45)"><circle r="4.8" fill="#1c1a08"/><rect x="-4.3" y="-1.5" width="8.6" height="3" fill="#cdbb3a"/></g>
<g transform="translate(495.6 679.2) rotate(20)"><circle r="4.8" fill="#1c1a08"/><rect x="-4.3" y="-1.5" width="8.6" height="3" fill="#cdbb3a"/></g>
<g transform="translate(515.8 691.0) rotate(20)"><circle r="4.8" fill="#cdbb3a"/><rect x="-3.8" y="-2.6" width="7.7" height="1.4" fill="#1c1a08"/><rect x="-3.8" y="1.2" width="7.7" height="1.4" fill="#1c1a08"/><circle r="4.8" fill="none" stroke="#1c1a08" stroke-width=".6"/></g>
<g transform="translate(668.8 430.0) rotate(25)"><circle r="4.8" fill="#cdbb3a"/><rect x="-3.8" y="-2.6" width="7.7" height="1.4" fill="#1c1a08"/><rect x="-3.8" y="1.2" width="7.7" height="1.4" fill="#1c1a08"/><circle r="4.8" fill="none" stroke="#1c1a08" stroke-width=".6"/></g>
<g transform="translate(563.7 466.9) rotate(90)"><circle r="6.1" fill="#6e6a1a"/><circle r="4.4" fill="#1c1a08"/><rect x="-3.9" y="-1.5" width="7.8" height="3" fill="#cdbb3a"/></g>
<g transform="translate(284.0 245.0) rotate(35)"><circle r="4.8" fill="#1c1a08"/><rect x="-4.3" y="-1.5" width="8.6" height="3" fill="#cdbb3a"/></g>
<g transform="translate(295.6 242.6) rotate(-30)"><circle r="4.8" fill="#1c1a08"/><rect x="-4.3" y="-1.5" width="8.6" height="3" fill="#cdbb3a"/></g>
<g transform="translate(262.4 213.0) rotate(20)"><circle r="4.6" fill="#1c1a08"/><rect x="-4.1" y="-1.5" width="8.2" height="3" fill="#cdbb3a"/></g>
<g transform="translate(376.4 218.6) rotate(65)"><circle r="4.8" fill="#1c1a08"/><rect x="-4.3" y="-1.5" width="8.6" height="3" fill="#cdbb3a"/></g>
<g transform="translate(400.4 223.4) rotate(70)"><circle r="4.8" fill="#1c1a08"/><rect x="-4.3" y="-1.5" width="8.6" height="3" fill="#cdbb3a"/></g>
<g transform="translate(416.4 229.0) rotate(65)"><circle r="4.8" fill="#1c1a08"/><rect x="-4.3" y="-1.5" width="8.6" height="3" fill="#cdbb3a"/></g>
<g transform="translate(526.5 237.3) rotate(-10)"><circle r="4.6" fill="#cdbb3a"/><rect x="-3.7" y="-2.6" width="7.4" height="1.4" fill="#1c1a08"/><rect x="-3.7" y="1.2" width="7.4" height="1.4" fill="#1c1a08"/><circle r="4.6" fill="none" stroke="#1c1a08" stroke-width=".6"/></g>
<rect x="243.0" y="512.4" width="442.6" height="181.3" fill="#0a0a00" fill-opacity=".27"/>
</g>
<text class="lb" x="560.6" y="79.0" fill="#d6d4fb" stroke="#d6d4fb" stroke-width="0.30" textLength="38.8" lengthAdjust="spacingAndGlyphs">Gravesend</text>
<text class="lb" x="563.0" y="113.0" fill="#cfcdfa" stroke="#cfcdfa" stroke-width="0.30" textLength="48.0" lengthAdjust="spacingAndGlyphs">West Malling</text>
<text class="lb" x="868.4" y="412.0" fill="#b6b5f7" stroke="#b6b5f7" stroke-width="0.30" textLength="47.6" lengthAdjust="spacingAndGlyphs">Amiens-Glisy</text>
<text class="lb" x="213.0" y="764.0" fill="#e6e6f4" stroke="#e6e6f4" stroke-width="0.30" textLength="20.0" lengthAdjust="spacingAndGlyphs">Dinan</text>
<g transform="translate(205.0 772.0) rotate(-30)"><circle r="6.3" fill="#4a4ad4"/><circle r="4.6" fill="#1e1e94"/><rect x="-4.1" y="-1.5" width="8.2" height="3" fill="#a6a6fc"/></g>
<path d="M0 81 H857.4 V796" fill="none" stroke="#ee1520" stroke-width="5" stroke-linejoin="miter"/>
<rect x="0" y="793.6" width="860" height="3" fill="#ee1520"/>
<g class="ti" font-size="12.4" fill="#0a0a0a" stroke="#0a0a0a" stroke-width="1.6" stroke-linejoin="round" filter="url(#sh2)" opacity=".85"><text x="11.6" y="81.9" textLength="36.0" lengthAdjust="spacingAndGlyphs">Original</text><text x="50.6" y="81.9" textLength="46.0" lengthAdjust="spacingAndGlyphs">Normandy</text><text x="99.0" y="81.9" textLength="21.6" lengthAdjust="spacingAndGlyphs">1944</text><text x="123.0" y="81.9" textLength="15.6" lengthAdjust="spacingAndGlyphs">Map</text><text x="141.6" y="81.9" textLength="47.0" lengthAdjust="spacingAndGlyphs">Boundary</text></g>
<g class="ti" font-size="12.4" fill="#fff" stroke="#fff" stroke-width="0.60" stroke-linejoin="round"><text x="11.0" y="81.0" textLength="36.0" lengthAdjust="spacingAndGlyphs">Original</text><text x="50.0" y="81.0" textLength="46.0" lengthAdjust="spacingAndGlyphs">Normandy</text><text x="98.4" y="81.0" textLength="21.6" lengthAdjust="spacingAndGlyphs">1944</text><text x="122.4" y="81.0" textLength="15.6" lengthAdjust="spacingAndGlyphs">Map</text><text x="141.0" y="81.0" textLength="47.0" lengthAdjust="spacingAndGlyphs">Boundary</text></g>
<g class="ti" font-size="23.4" fill="#0a0a0a" stroke="#0a0a0a" stroke-width="2.6" stroke-linejoin="round" filter="url(#sh)" opacity=".85"><text x="240.0" y="212.5" textLength="70.7" lengthAdjust="spacingAndGlyphs">Updated</text><text x="315.2" y="212.5" textLength="89.3" lengthAdjust="spacingAndGlyphs">Normandy</text><text x="409.6" y="212.5" textLength="38.8" lengthAdjust="spacingAndGlyphs">1944</text><text x="453.0" y="212.5" textLength="37.0" lengthAdjust="spacingAndGlyphs">High</text><text x="494.4" y="212.5" textLength="46.0" lengthAdjust="spacingAndGlyphs">Detail</text><text x="545.0" y="212.5" textLength="42.0" lengthAdjust="spacingAndGlyphs">Area</text></g>
<g class="ti" font-size="23.4" fill="#fff" stroke="#fff" stroke-width="1.10" stroke-linejoin="round"><text x="239.0" y="211.0" textLength="70.7" lengthAdjust="spacingAndGlyphs">Updated</text><text x="314.2" y="211.0" textLength="89.3" lengthAdjust="spacingAndGlyphs">Normandy</text><text x="408.6" y="211.0" textLength="38.8" lengthAdjust="spacingAndGlyphs">1944</text><text x="452.0" y="211.0" textLength="37.0" lengthAdjust="spacingAndGlyphs">High</text><text x="493.4" y="211.0" textLength="46.0" lengthAdjust="spacingAndGlyphs">Detail</text><text x="544.0" y="211.0" textLength="42.0" lengthAdjust="spacingAndGlyphs">Area</text></g>
<g class="ti" font-size="12.0" fill="#0a0a0a" stroke="#0a0a0a" stroke-width="1.6" stroke-linejoin="round" filter="url(#sh2)" opacity=".85"><text x="246.6" y="689.9" textLength="36.0" lengthAdjust="spacingAndGlyphs">Original</text><text x="285.6" y="689.9" textLength="46.0" lengthAdjust="spacingAndGlyphs">Normandy</text><text x="334.2" y="689.9" textLength="21.4" lengthAdjust="spacingAndGlyphs">1944</text><text x="358.2" y="689.9" textLength="20.4" lengthAdjust="spacingAndGlyphs">High</text><text x="381.0" y="689.9" textLength="26.6" lengthAdjust="spacingAndGlyphs">Detail</text><text x="410.2" y="689.9" textLength="20.4" lengthAdjust="spacingAndGlyphs">Area</text></g>
<g class="ti" font-size="12.0" fill="#fff" stroke="#fff" stroke-width="0.60" stroke-linejoin="round"><text x="246.0" y="689.0" textLength="36.0" lengthAdjust="spacingAndGlyphs">Original</text><text x="285.0" y="689.0" textLength="46.0" lengthAdjust="spacingAndGlyphs">Normandy</text><text x="333.6" y="689.0" textLength="21.4" lengthAdjust="spacingAndGlyphs">1944</text><text x="357.6" y="689.0" textLength="20.4" lengthAdjust="spacingAndGlyphs">High</text><text x="380.4" y="689.0" textLength="26.6" lengthAdjust="spacingAndGlyphs">Detail</text><text x="409.6" y="689.0" textLength="20.4" lengthAdjust="spacingAndGlyphs">Area</text></g>
<g class="ti" font-size="24.8" fill="#0a0a0a" stroke="#0a0a0a" stroke-width="2.6" stroke-linejoin="round" filter="url(#sh)" opacity=".85"><text x="240.0" y="786.2" textLength="35.6" lengthAdjust="spacingAndGlyphs">New</text><text x="280.6" y="786.2" textLength="93.4" lengthAdjust="spacingAndGlyphs">Normandy</text><text x="378.6" y="786.2" textLength="29.0" lengthAdjust="spacingAndGlyphs">2.0</text><text x="412.6" y="786.2" textLength="37.9" lengthAdjust="spacingAndGlyphs">High</text><text x="454.5" y="786.2" textLength="47.2" lengthAdjust="spacingAndGlyphs">Detail</text><text x="506.0" y="786.2" textLength="51.8" lengthAdjust="spacingAndGlyphs">Area</text></g>
<g class="ti" font-size="24.8" fill="#fff" stroke="#fff" stroke-width="1.15" stroke-linejoin="round"><text x="239.0" y="784.7" textLength="35.6" lengthAdjust="spacingAndGlyphs">New</text><text x="279.6" y="784.7" textLength="93.4" lengthAdjust="spacingAndGlyphs">Normandy</text><text x="377.6" y="784.7" textLength="29.0" lengthAdjust="spacingAndGlyphs">2.0</text><text x="411.6" y="784.7" textLength="37.9" lengthAdjust="spacingAndGlyphs">High</text><text x="453.5" y="784.7" textLength="47.2" lengthAdjust="spacingAndGlyphs">Detail</text><text x="505.0" y="784.7" textLength="51.8" lengthAdjust="spacingAndGlyphs">Area</text></g>
</svg></body></html>
